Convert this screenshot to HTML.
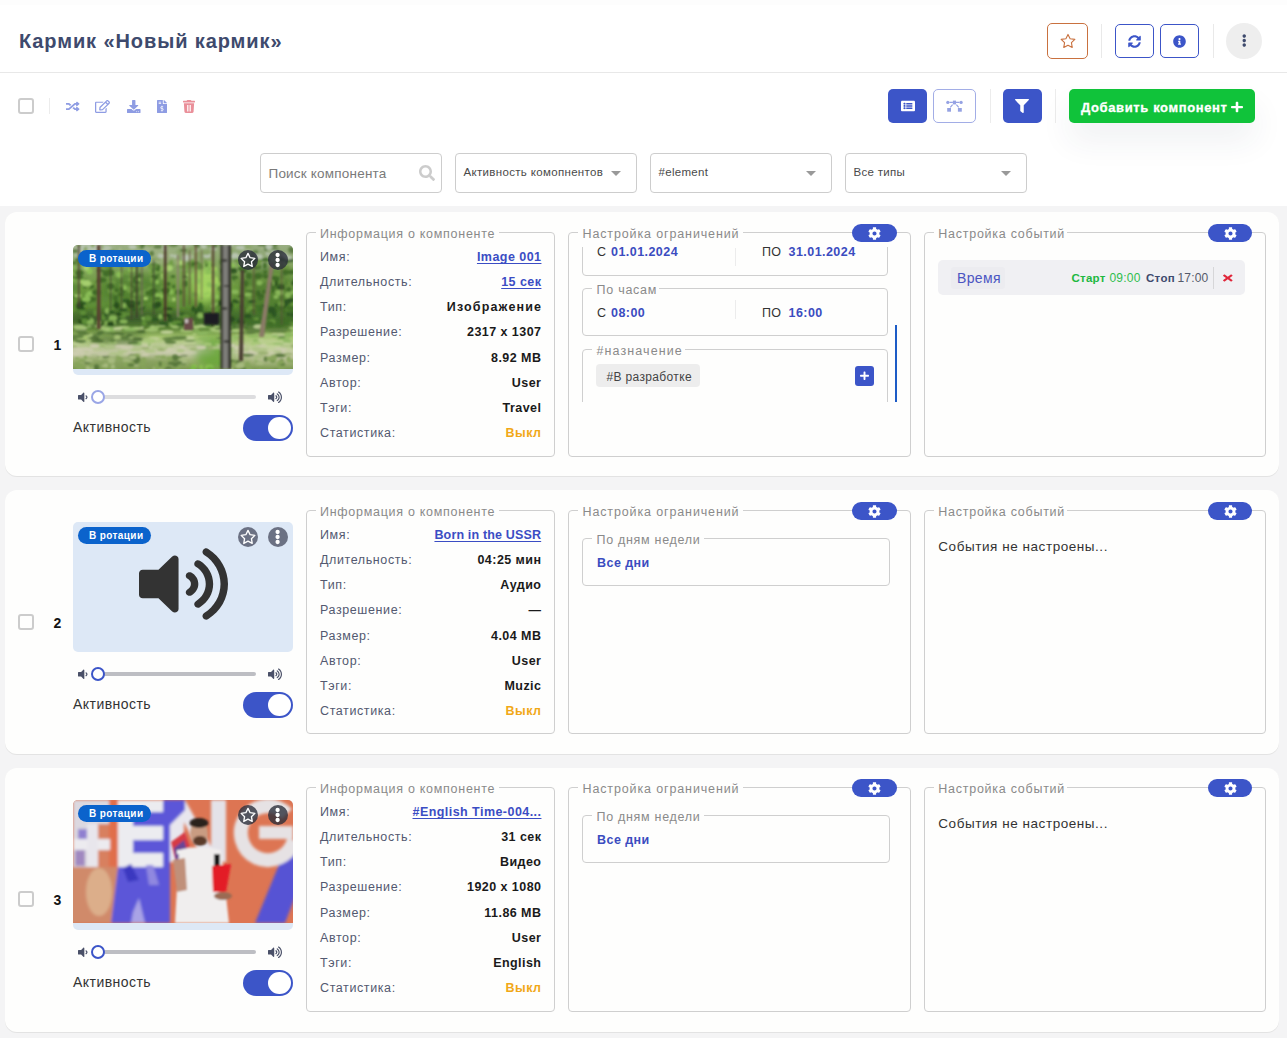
<!DOCTYPE html>
<html><head><meta charset="utf-8"><style>
html,body{margin:0;padding:0;}
body{width:1287px;height:1038px;overflow:hidden;position:relative;background:#ffffff;font-family:"Liberation Sans",sans-serif;}
.a{position:absolute;}
.t{position:absolute;white-space:nowrap;}
svg.a{overflow:visible;}
</style></head><body>
<div class="a" style="left:0px;top:0px;width:1287px;height:5px;background:#fdfdfd;"></div>
<div class="t" style="top:30.87px;font-size:20px;line-height:20px;font-weight:700;color:#3e4a6d;letter-spacing:0.9px;left:19px;">Кармик «Новый кармик»</div>
<div class="a" style="left:0px;top:72px;width:1287px;height:1px;background:#e8e8e8;"></div>
<div class="a" style="left:1047px;top:23px;width:41px;height:36px;box-sizing:border-box;border:1px solid #c9713f;border-radius:5px;"></div>
<svg class="a" style="left:1057.5px;top:31px;width:20px;height:20px" viewBox="0 0 20 20"><polygon points="10.00,3.40 12.12,7.69 16.85,8.38 13.42,11.71 14.23,16.42 10.00,14.20 5.77,16.42 6.58,11.71 3.15,8.38 7.88,7.69" fill="none" stroke="#c9713f" stroke-width="1.1" stroke-linejoin="round"/></svg>
<div class="a" style="left:1101px;top:24px;width:1px;height:34px;background:#e9e9e9;"></div>
<div class="a" style="left:1115px;top:24px;width:39px;height:34px;box-sizing:border-box;border:1px solid #3c55c8;border-radius:5px;"></div>
<svg class="a" style="left:1128px;top:35px;width:13px;height:13px;" viewBox="0 0 512 512" preserveAspectRatio="none"><path fill="#3c55c8" d="M370.72 133.28C339.458 104.008 298.888 87.962 255.848 88c-77.458.068-144.328 53.178-162.791 126.85-1.344 5.363-6.122 9.15-11.651 9.15H24.103c-7.498 0-13.194-6.807-11.807-14.176C33.933 94.924 134.813 8 256 8c66.448 0 126.791 26.136 171.315 68.685L463.03 40.97C478.149 25.851 504 36.559 504 57.941V192c0 13.255-10.745 24-24 24H345.941c-21.382 0-32.090-25.851-16.971-40.971l41.750-41.749zM32 296h134.059c21.382 0 32.090 25.851 16.971 40.971l-41.750 41.750c31.262 29.273 71.835 45.319 114.876 45.280 77.418-.07 144.315-53.144 162.787-126.849 1.344-5.363 6.122-9.150 11.651-9.150h57.304c7.498 0 13.194 6.807 11.807 14.176C478.067 417.076 377.187 504 256 504c-66.448 0-126.791-26.136-171.315-68.685L48.970 471.030C33.851 486.149 8 475.441 8 454.059V320c0-13.255 10.745-24 24-24z"/></svg>
<div class="a" style="left:1160px;top:24px;width:39px;height:34px;box-sizing:border-box;border:1px solid #3c55c8;border-radius:5px;"></div>
<svg class="a" style="left:1173px;top:34.5px;width:13px;height:13px;" viewBox="0 0 512 512" preserveAspectRatio="none"><path fill="#3c55c8" d="M256 8C119.043 8 8 119.083 8 256c0 136.997 111.043 248 248 248s248-111.003 248-248C504 119.083 392.957 8 256 8zm0 110c23.196 0 42 18.804 42 42s-18.804 42-42 42-42-18.804-42-42 18.804-42 42-42zm56 254c0 6.627-5.373 12-12 12h-88c-6.627 0-12-5.373-12-12v-24c0-6.627 5.373-12 12-12h12v-64h-12c-6.627 0-12-5.373-12-12v-24c0-6.627 5.373-12 12-12h64c6.627 0 12 5.373 12 12v100h12c6.627 0 12 5.373 12 12v24z"/></svg>
<div class="a" style="left:1213px;top:24px;width:1px;height:34px;background:#e9e9e9;"></div>
<div class="a" style="left:1226px;top:23px;width:36px;height:36px;background:#eeeeee;border-radius:50%;"></div>
<svg class="a" style="left:1241.5px;top:34px;width:4.5px;height:13px;" viewBox="0 0 192 512" preserveAspectRatio="none"><path fill="#3e4a6d" d="M96 184c39.8 0 72 32.2 72 72s-32.2 72-72 72-72-32.2-72-72 32.2-72 72-72zM24 80c0 39.8 32.2 72 72 72s72-32.2 72-72S135.8 8 96 8 24 40.2 24 80zm0 352c0 39.8 32.2 72 72 72s72-32.2 72-72-32.2-72-72-72-72 32.2-72 72z"/></svg>
<div class="a" style="left:18px;top:98px;width:16px;height:16px;box-sizing:border-box;border:2px solid #cccccc;border-radius:3px;"></div>
<div class="a" style="left:49px;top:98px;width:1px;height:16px;background:#ececec;"></div>
<svg class="a" style="left:65.5px;top:100.5px;width:13.5px;height:11px;" viewBox="0 0 512 512" preserveAspectRatio="none"><path fill="#8e9ce3" d="M504.971 359.029c9.373 9.373 9.373 24.569 0 33.941l-80 79.984c-15.010 15.010-40.971 4.490-40.971-16.971V416h-58.785a12.004 12.004 0 0 1-8.773-3.812l-70.556-75.596 53.333-57.143L352 336h32v-39.981c0-21.438 25.943-31.998 40.971-16.971l80 79.981zM12 176h84l52.781 56.551 53.333-57.143-70.556-75.596A11.999 11.999 0 0 0 122.785 96H12c-6.627 0-12 5.373-12 12v56c0 6.627 5.373 12 12 12zm372 0v39.984c0 21.460 25.961 31.980 40.971 16.971l80-79.984c9.373-9.373 9.373-24.569 0-33.941l-80-79.981C409.943 24.021 384 34.582 384 56.019V96h-58.785a12.004 12.004 0 0 0-8.773 3.812L96 336H12c-6.627 0-12 5.373-12 12v56c0 6.627 5.373 12 12 12h110.785c3.326 0 6.503-1.381 8.773-3.812L352 176h32z"/></svg>
<svg class="a" style="left:95px;top:99.5px;width:15px;height:13px;" viewBox="0 0 576 512" preserveAspectRatio="none"><path fill="#8e9ce3" d="M402.3 344.9l32-32c5-5 13.7-1.5 13.7 5.7V464c0 26.5-21.5 48-48 48H48c-26.5 0-48-21.5-48-48V112c0-26.5 21.5-48 48-48h273.5c7.1 0 10.7 8.6 5.7 13.7l-32 32c-1.5 1.5-3.5 2.3-5.7 2.3H48v352h352V350.5c0-2.1.8-4.1 2.3-5.6zm156.6-201.8L296.3 405.7l-90.4 10c-26.2 2.9-48.5-19.2-45.6-45.6l10-90.4L432.9 17.1c22.9-22.9 59.9-22.9 82.7 0l43.2 43.2c22.9 22.9 22.9 60 .1 82.8zM460.1 174L402 115.9 216.2 301.8l-7.3 65.3 65.3-7.3L460.1 174zm64.8-79.7l-43.2-43.2c-4.1-4.1-10.8-4.1-14.8 0L436 82l58.1 58.1 30.9-30.9c4-4.2 4-10.8-.1-14.9z"/></svg>
<svg class="a" style="left:127px;top:99.5px;width:13.5px;height:13px;" viewBox="0 0 512 512" preserveAspectRatio="none"><path fill="#8e9ce3" d="M216 0h80c13.3 0 24 10.7 24 24v168h87.7c17.8 0 26.7 21.5 14.1 34.1L269.7 378.3c-7.5 7.5-19.8 7.5-27.3 0L90.1 226.1c-12.6-12.6-3.7-34.1 14.1-34.1H192V24c0-13.3 10.7-24 24-24zm296 376v112c0 13.3-10.7 24-24 24H24c-13.3 0-24-10.7-24-24V376c0-13.3 10.7-24 24-24h146.7l49 49c20.1 20.1 52.5 20.1 72.6 0l49-49H488c13.3 0 24 10.7 24 24zm-124 88c0-11-9-20-20-20s-20 9-20 20 9 20 20 20 20-9 20-20zm64 0c0-11-9-20-20-20s-20 9-20 20 9 20 20 20 20-9 20-20z"/></svg>
<svg class="a" style="left:157px;top:99.5px;width:10px;height:13px;" viewBox="0 0 384 512" preserveAspectRatio="none"><path fill="#8e9ce3" d="M377 105L279.1 7c-4.5-4.5-10.6-7-17-7H256v128h128v-6.1c0-6.3-2.5-12.4-7-16.9zm-153 31V0H24C10.7 0 0 10.7 0 24v464c0 13.3 10.7 24 24 24h336c13.3 0 24-10.7 24-24V160H248c-13.2 0-24-10.8-24-24zM64 72c0-4.42 3.58-8 8-8h80c4.42 0 8 3.58 8 8v16c0 4.42-3.58 8-8 8H72c-4.42 0-8-3.58-8-8V72zm0 80v-16c0-4.42 3.58-8 8-8h80c4.42 0 8 3.58 8 8v16c0 4.42-3.58 8-8 8H72c-4.42 0-8-3.58-8-8zm144 263.88V440c0 4.42-3.58 8-8 8h-16c-4.42 0-8-3.58-8-8v-24.29c-11.29-.58-22.27-4.52-31.37-11.35-3.9-2.93-4.1-8.77-.57-12.14l11.75-11.21c2.77-2.64 6.89-2.76 10.13-.73 3.87 2.42 8.26 3.72 12.82 3.72h28.11c6.5 0 11.8-5.92 11.8-13.19 0-5.95-3.61-11.19-8.77-12.73l-45-13.5c-18.59-5.580-31.58-23.42-31.58-43.39 0-24.52 19.05-44.44 42.67-45.07V232c0-4.42 3.58-8 8-8h16c4.42 0 8 3.58 8 8v24.29c11.29.58 22.27 4.51 31.37 11.35 3.9 2.93 4.1 8.77.57 12.14l-11.75 11.21c-2.77 2.64-6.89 2.76-10.13.73-3.87-2.43-8.26-3.72-12.82-3.72h-28.11c-6.5 0-11.8 5.92-11.8 13.19 0 5.95 3.61 11.19 8.77 12.73l45 13.5c18.59 5.58 31.58 23.42 31.58 43.39 0 24.53-19.05 44.44-42.67 45.07z"/></svg>
<svg class="a" style="left:183px;top:99.5px;width:12px;height:13px;" viewBox="0 0 448 512" preserveAspectRatio="none"><path fill="#ea8f99" d="M432 32H312l-9.4-18.7A24 24 0 0 0 281.1 0H166.8a23.72 23.72 0 0 0-21.4 13.3L136 32H16A16 16 0 0 0 0 48v32a16 16 0 0 0 16 16h416a16 16 0 0 0 16-16V48a16 16 0 0 0-16-16zM53.2 467a48 48 0 0 0 47.9 45h245.8a48 48 0 0 0 47.9-45L416 128H32zM150 192h30v256h-30zM209 192h30v256h-30zM268 192h30v256h-30z"/></svg>
<div class="a" style="left:888px;top:89px;width:39px;height:34px;background:#3c55c8;border-radius:5px;"></div>
<svg class="a" style="left:900.5px;top:100px;width:14px;height:12px;" viewBox="0 0 512 512" preserveAspectRatio="none"><path fill="#ffffff" d="M464 480H48c-26.51 0-48-21.49-48-48V80c0-26.51 21.49-48 48-48h416c26.51 0 48 21.49 48 48v352c0 26.51-21.49 48-48 48zM128 120c-22.091 0-40 17.909-40 40s17.909 40 40 40 40-17.909 40-40-17.909-40-40-40zm0 96c-22.091 0-40 17.909-40 40s17.909 40 40 40 40-17.909 40-40-17.909-40-40-40zm0 96c-22.091 0-40 17.909-40 40s17.909 40 40 40 40-17.909 40-40-17.909-40-40-40zm288-136v-32c0-6.627-5.373-12-12-12H204c-6.627 0-12 5.373-12 12v32c0 6.627 5.373 12 12 12h200c6.627 0 12-5.373 12-12zm0 96v-32c0-6.627-5.373-12-12-12H204c-6.627 0-12 5.373-12 12v32c0 6.627 5.373 12 12 12h200c6.627 0 12-5.373 12-12zm0 96v-32c0-6.627-5.373-12-12-12H204c-6.627 0-12 5.373-12 12v32c0 6.627 5.373 12 12 12h200c6.627 0 12-5.373 12-12z"/></svg>
<div class="a" style="left:933px;top:89px;width:43px;height:34px;box-sizing:border-box;border:1px solid #a2ade6;border-radius:5px;"></div>
<svg class="a" style="left:946px;top:100px;width:17px;height:12px" viewBox="0 0 17 12"><g fill="#95a2e3"><circle cx="1.8" cy="2.4" r="1.6"/><circle cx="15.1" cy="2.4" r="1.6"/><rect x="6.9" y="0.6" width="3.1" height="3.8"/><rect x="1.2" y="8" width="3.8" height="3.7"/><rect x="11.9" y="8" width="3.9" height="3.7"/></g><g stroke="#95a2e3" stroke-width="1.1" fill="none"><path d="M3.4 2.4H6.9M10 2.4H13.5M6.6 4.6L4.3 7.4M10.4 4.6L12.7 7.4"/></g></svg>
<div class="a" style="left:990px;top:89px;width:1px;height:34px;background:#ececec;"></div>
<div class="a" style="left:1003px;top:89px;width:39px;height:34px;background:#3c55c8;border-radius:5px;"></div>
<svg class="a" style="left:1015px;top:99px;width:14px;height:14px;" viewBox="0 0 512 512" preserveAspectRatio="none"><path fill="#ffffff" d="M487.976 0H24.028C2.710 0-8.047 25.866 7.058 40.971L192 225.941V432c0 7.831 3.821 15.170 10.237 19.662l80 55.980C298.020 518.690 320 507.493 320 487.980V225.941l184.947-184.970C520.021 25.896 509.338 0 487.976 0z"/></svg>
<div class="a" style="left:1055px;top:89px;width:1px;height:34px;background:#ececec;"></div>
<div class="a" style="left:1069px;top:89px;width:186px;height:34px;background:#10c33a;border-radius:5px;box-shadow:0 18px 32px rgba(40,50,90,0.07);"></div>
<div class="t" style="top:100.80px;font-size:13px;line-height:13px;font-weight:700;color:#ffffff;letter-spacing:0.62px;left:1081px;-webkit-text-stroke:0.3px #ffffff;">Добавить компонент</div>
<svg class="a" style="left:1230.5px;top:100.5px;width:12px;height:12px;transform:none;" viewBox="0 0 448 512" preserveAspectRatio="none"><path fill="#ffffff" d="M416 208H272V64c0-17.67-14.33-32-32-32h-32c-17.67 0-32 14.33-32 32v144H32c-17.67 0-32 14.33-32 32v32c0 17.67 14.33 32 32 32h144v144c0 17.67 14.33 32 32 32h32c17.67 0 32-14.33 32-32V304h144c17.67 0 32-14.33 32-32v-32c0-17.67-14.33-32-32-32z"/></svg>
<div class="a" style="left:260px;top:153px;width:182px;height:40px;box-sizing:border-box;border:1px solid #cdcdcd;border-radius:4px;background:#fff;"></div>
<div class="t" style="top:167.07px;font-size:13.5px;line-height:13.5px;font-weight:400;color:#7a7a7a;letter-spacing:0.2px;left:268.5px;">Поиск компонента</div>
<svg class="a" style="left:419px;top:165px;width:16px;height:16px;" viewBox="0 0 512 512" preserveAspectRatio="none"><path fill="#cccccc" d="M505 442.7L405.3 343c-4.5-4.5-10.6-7-17-7H372c27.6-35.3 44-79.7 44-128C416 93.1 322.9 0 208 0S0 93.1 0 208s93.1 208 208 208c48.3 0 92.7-16.4 128-44v16.3c0 6.4 2.5 12.5 7 17l99.7 99.7c9.4 9.4 24.6 9.4 33.9 0l28.3-28.3c9.4-9.4 9.4-24.6.1-34zM208 336c-70.7 0-128-57.2-128-128 0-70.7 57.2-128 128-128 70.7 0 128 57.2 128 128 0 70.7-57.2 128-128 128z"/></svg>
<div class="a" style="left:455px;top:153px;width:182px;height:40px;box-sizing:border-box;border:1px solid #cdcdcd;border-radius:4px;background:#fff;"></div>
<div class="t" style="top:166.87px;font-size:11.5px;line-height:11.5px;font-weight:400;color:#4a4a4a;letter-spacing:0.33px;left:463.5px;">Активность комопнентов</div>
<svg class="a" style="left:611px;top:171px;width:10px;height:5px" viewBox="0 0 10 5"><path d="M0 0H10L5 5z" fill="#999"/></svg>
<div class="a" style="left:650px;top:153px;width:182px;height:40px;box-sizing:border-box;border:1px solid #cdcdcd;border-radius:4px;background:#fff;"></div>
<div class="t" style="top:166.87px;font-size:11.5px;line-height:11.5px;font-weight:400;color:#4a4a4a;letter-spacing:0.3px;left:658.5px;">#element</div>
<svg class="a" style="left:806px;top:171px;width:10px;height:5px" viewBox="0 0 10 5"><path d="M0 0H10L5 5z" fill="#999"/></svg>
<div class="a" style="left:845px;top:153px;width:182px;height:40px;box-sizing:border-box;border:1px solid #cdcdcd;border-radius:4px;background:#fff;"></div>
<div class="t" style="top:166.87px;font-size:11.5px;line-height:11.5px;font-weight:400;color:#4a4a4a;letter-spacing:0.3px;left:853.5px;">Все типы</div>
<svg class="a" style="left:1001px;top:171px;width:10px;height:5px" viewBox="0 0 10 5"><path d="M0 0H10L5 5z" fill="#999"/></svg>
<div class="a" style="left:0px;top:206px;width:1287px;height:832px;background:#f4f4f5;"></div>
<div class="a" style="left:5px;top:212px;width:1274px;height:264px;background:#fefefd;border-radius:12px;box-shadow:0 1px 0 #e3e3e3;"></div>
<div class="a" style="left:18px;top:336px;width:16px;height:16px;box-sizing:border-box;border:2px solid #cccccc;border-radius:3px;"></div>
<div class="t" style="top:338.15px;font-size:14px;line-height:14px;font-weight:700;color:#141414;left:53.5px;">1</div>
<div class="a" style="left:73px;top:245px;width:220px;height:130px;background:#dde8f6;border-radius:5px;"></div>
<div class="a" style="left:73px;top:245px;width:220px;height:124px;overflow:hidden;border-radius:5px 5px 0 0;"><svg class="a" style="left:0;top:0px;width:220px;height:124px" viewBox="0 0 220 124" preserveAspectRatio="none">
<defs>
<linearGradient id="fg" x1="0" y1="0" x2="0" y2="1">
<stop offset="0" stop-color="#9aae82"/><stop offset="0.15" stop-color="#86a462"/><stop offset="0.35" stop-color="#6c9a3e"/><stop offset="0.5" stop-color="#5b8a33"/><stop offset="0.6" stop-color="#44692a"/><stop offset="0.67" stop-color="#587f34"/><stop offset="0.74" stop-color="#a3c26c"/><stop offset="0.8" stop-color="#b3c888"/><stop offset="0.87" stop-color="#c4c9a6"/><stop offset="0.93" stop-color="#9fb276"/><stop offset="1" stop-color="#7d9a52"/>
</linearGradient>
<filter id="fb" x="-20%" y="-10%" width="140%" height="120%"><feGaussianBlur stdDeviation="0.9"/></filter>
<filter id="fbl" x="-5%" y="-5%" width="110%" height="110%"><feGaussianBlur stdDeviation="0.8"/></filter>
<filter id="fb2" x="-30%" y="-30%" width="160%" height="160%"><feGaussianBlur stdDeviation="4"/></filter>
<filter id="ftex" x="0" y="0" width="100%" height="100%"><feTurbulence type="fractalNoise" baseFrequency="0.1 0.08" numOctaves="3" seed="7"/><feColorMatrix type="matrix" values="0 0 0 0 0.1  0 0 0 0 0.17  0 0 0 0 0.05  3.2 0 0 0 -1.35"/></filter>
<filter id="ftex2" x="0" y="0" width="100%" height="100%"><feTurbulence type="fractalNoise" baseFrequency="0.13 0.1" numOctaves="2" seed="21"/><feColorMatrix type="matrix" values="0 0 0 0 0.66  0 0 0 0 0.86  0 0 0 0 0.36  3.0 0 0 0 -1.5"/></filter>
</defs>
<rect width="220" height="124" fill="url(#fg)"/>
<g filter="url(#fb2)">
<ellipse cx="18" cy="6" rx="20" ry="9" fill="#c2ccc0" opacity="0.8"/>
<ellipse cx="80" cy="12" rx="25" ry="8" fill="#a9b88e" opacity="0.6"/>
<ellipse cx="60" cy="45" rx="35" ry="16" fill="#4d7a2c" opacity="0.7"/>
<ellipse cx="132" cy="40" rx="13" ry="18" fill="#a6d862" opacity="0.9"/>
<ellipse cx="195" cy="50" rx="28" ry="28" fill="#4f7c2e" opacity="0.8"/>
<ellipse cx="188" cy="12" rx="30" ry="9" fill="#90a67a" opacity="0.7"/>
<ellipse cx="60" cy="72" rx="60" ry="5" fill="#38582a" opacity="0.8"/>
<ellipse cx="170" cy="75" rx="50" ry="8" fill="#3f6a2a" opacity="0.8"/>
<ellipse cx="45" cy="94" rx="28" ry="5" fill="#4e6e34" opacity="0.85"/>
<ellipse cx="140" cy="108" rx="18" ry="16" fill="#68a536" opacity="0.9"/>
<ellipse cx="200" cy="100" rx="25" ry="6" fill="#c4d69a" opacity="0.8"/>
<ellipse cx="90" cy="104" rx="50" ry="3" fill="#d4d2bc" opacity="0.8"/>
<ellipse cx="200" cy="112" rx="25" ry="4" fill="#d0cdb4" opacity="0.7"/>
<ellipse cx="60" cy="119" rx="50" ry="6" fill="#7e9a55" opacity="0.8"/>
</g>
<g filter="url(#fbl)" opacity="0.95"><ellipse cx="104.3" cy="82.5" rx="5.6" ry="0.9" fill="#a8c878"/><ellipse cx="81.7" cy="32.6" rx="3.9" ry="2.8" fill="#3f6a28"/><ellipse cx="123.2" cy="83.0" rx="3.1" ry="1.3" fill="#a8c878"/><ellipse cx="201.7" cy="4.6" rx="4.0" ry="1.4" fill="#5a7a40"/><ellipse cx="73.2" cy="49.6" rx="4.0" ry="1.2" fill="#6f9c44"/><ellipse cx="203.8" cy="63.2" rx="1.8" ry="3.5" fill="#2a5220"/><ellipse cx="22.4" cy="52.0" rx="1.9" ry="1.9" fill="#3f6a28"/><ellipse cx="34.0" cy="87.6" rx="2.6" ry="1.0" fill="#5e8040"/><ellipse cx="87.5" cy="51.4" rx="3.3" ry="2.3" fill="#8cc058"/><ellipse cx="3.9" cy="91.4" rx="7.0" ry="2.1" fill="#5e8040"/><ellipse cx="77.5" cy="44.2" rx="3.6" ry="2.7" fill="#6f9c44"/><ellipse cx="50.1" cy="44.2" rx="3.0" ry="3.1" fill="#3f6a28"/><ellipse cx="3.4" cy="103.9" rx="4.5" ry="1.4" fill="#cdcdb0"/><ellipse cx="93.6" cy="47.5" rx="3.8" ry="1.4" fill="#3f6a28"/><ellipse cx="37.2" cy="87.5" rx="2.6" ry="1.1" fill="#4a6a30"/><ellipse cx="140.9" cy="3.8" rx="2.9" ry="1.7" fill="#b9c5b2"/><ellipse cx="104.6" cy="121.6" rx="2.9" ry="3.4" fill="#86a45a"/><ellipse cx="205.9" cy="44.3" rx="2.1" ry="2.9" fill="#2e5420"/><ellipse cx="-1.5" cy="31.9" rx="3.8" ry="2.0" fill="#6f9c44"/><ellipse cx="-1.0" cy="2.2" rx="3.4" ry="3.5" fill="#a4b48c"/><ellipse cx="110.8" cy="0.1" rx="2.5" ry="3.0" fill="#a4b48c"/><ellipse cx="141.5" cy="26.8" rx="3.1" ry="2.3" fill="#8cc058"/><ellipse cx="56.4" cy="120.1" rx="4.2" ry="1.6" fill="#86a45a"/><ellipse cx="194.3" cy="33.2" rx="4.3" ry="2.4" fill="#6a9440"/><ellipse cx="156.3" cy="24.8" rx="2.4" ry="1.8" fill="#3f6a28"/><ellipse cx="153.9" cy="14.1" rx="4.2" ry="2.2" fill="#6f9c44"/><ellipse cx="95.4" cy="124.3" rx="3.2" ry="2.6" fill="#56763a"/><ellipse cx="214.4" cy="95.9" rx="4.4" ry="1.5" fill="#8cb860"/><ellipse cx="175.4" cy="72.4" rx="2.5" ry="2.0" fill="#2a5220"/><ellipse cx="124.3" cy="-0.8" rx="3.6" ry="3.3" fill="#5a7a40"/><ellipse cx="199.8" cy="115.4" rx="3.1" ry="3.0" fill="#86a45a"/><ellipse cx="19.2" cy="42.9" rx="2.4" ry="3.3" fill="#3f6a28"/><ellipse cx="119.4" cy="77.9" rx="1.9" ry="2.4" fill="#8ab85a"/><ellipse cx="86.1" cy="28.9" rx="2.7" ry="1.9" fill="#3f6a28"/><ellipse cx="29.0" cy="8.8" rx="2.4" ry="2.8" fill="#5a7a40"/><ellipse cx="146.0" cy="118.5" rx="2.6" ry="1.3" fill="#6aa83a"/><ellipse cx="97.3" cy="20.3" rx="3.5" ry="2.0" fill="#6f9c44"/><ellipse cx="71.0" cy="119.7" rx="1.5" ry="2.0" fill="#86a45a"/><ellipse cx="42.5" cy="53.2" rx="2.2" ry="3.3" fill="#3f6a28"/><ellipse cx="154.8" cy="18.1" rx="2.9" ry="2.6" fill="#5d8a3a"/><ellipse cx="53.5" cy="56.8" rx="4.1" ry="3.1" fill="#2f5a22"/><ellipse cx="118.6" cy="96.0" rx="4.3" ry="1.6" fill="#c0d098"/><ellipse cx="216.8" cy="69.0" rx="3.5" ry="2.0" fill="#2a5220"/><ellipse cx="69.8" cy="62.0" rx="2.6" ry="1.9" fill="#2f5a22"/><ellipse cx="48.0" cy="67.8" rx="2.3" ry="1.3" fill="#264a1a"/><ellipse cx="61.6" cy="118.7" rx="3.3" ry="2.1" fill="#56763a"/><ellipse cx="199.8" cy="38.7" rx="1.9" ry="2.7" fill="#8ab85a"/><ellipse cx="134.5" cy="99.0" rx="4.4" ry="1.6" fill="#a8c878"/><ellipse cx="89.0" cy="46.4" rx="2.7" ry="2.1" fill="#a9d271"/><ellipse cx="35.4" cy="23.7" rx="2.3" ry="3.4" fill="#3f6a28"/><ellipse cx="9.0" cy="105.6" rx="6.6" ry="1.9" fill="#cdcdb0"/><ellipse cx="163.0" cy="36.7" rx="1.9" ry="3.2" fill="#8ab85a"/><ellipse cx="44.7" cy="111.4" rx="2.5" ry="1.1" fill="#86a45a"/><ellipse cx="35.7" cy="18.2" rx="3.6" ry="1.9" fill="#6f9c44"/><ellipse cx="38.6" cy="37.6" rx="4.1" ry="2.6" fill="#6f9c44"/><ellipse cx="151.8" cy="66.7" rx="2.8" ry="2.4" fill="#5f8f38"/><ellipse cx="178.0" cy="62.7" rx="3.4" ry="2.3" fill="#6a9a3e"/><ellipse cx="84.8" cy="50.9" rx="3.0" ry="2.8" fill="#8cc058"/><ellipse cx="206.0" cy="60.9" rx="4.1" ry="2.8" fill="#2a5220"/><ellipse cx="151.2" cy="52.5" rx="2.7" ry="2.6" fill="#a9d271"/><ellipse cx="186.6" cy="13.8" rx="1.7" ry="1.4" fill="#b9c5b2"/><ellipse cx="9.8" cy="-1.9" rx="2.2" ry="1.5" fill="#5a7a40"/><ellipse cx="136.2" cy="122.5" rx="4.4" ry="2.9" fill="#88c050"/><ellipse cx="3.3" cy="26.6" rx="4.3" ry="2.3" fill="#6f9c44"/><ellipse cx="168.0" cy="52.1" rx="3.1" ry="1.9" fill="#3f6a28"/><ellipse cx="16.7" cy="75.9" rx="4.4" ry="3.5" fill="#8ab85a"/><ellipse cx="208.0" cy="44.1" rx="2.4" ry="3.3" fill="#6a9440"/><ellipse cx="148.2" cy="-1.4" rx="2.2" ry="2.3" fill="#5a7a40"/><ellipse cx="183.6" cy="95.4" rx="4.0" ry="1.2" fill="#8cb860"/><ellipse cx="220.6" cy="60.0" rx="2.1" ry="2.6" fill="#6a9a3e"/><ellipse cx="78.7" cy="27.0" rx="2.7" ry="2.6" fill="#6f9c44"/><ellipse cx="119.3" cy="120.8" rx="3.7" ry="1.8" fill="#86a45a"/><ellipse cx="20.1" cy="92.8" rx="5.4" ry="1.0" fill="#5e8040"/><ellipse cx="131.7" cy="72.0" rx="2.6" ry="1.9" fill="#5f8f38"/><ellipse cx="222.4" cy="39.9" rx="3.0" ry="2.3" fill="#3f6a28"/><ellipse cx="87.3" cy="23.6" rx="2.5" ry="2.0" fill="#8cc058"/><ellipse cx="209.0" cy="35.6" rx="2.5" ry="2.7" fill="#6a9440"/><ellipse cx="113.6" cy="81.2" rx="2.8" ry="1.6" fill="#a8c878"/><ellipse cx="53.6" cy="102.3" rx="7.1" ry="1.6" fill="#cdcdb0"/><ellipse cx="96.0" cy="33.7" rx="4.0" ry="1.7" fill="#6f9c44"/><ellipse cx="141.2" cy="79.8" rx="3.3" ry="2.3" fill="#264a1a"/><ellipse cx="100.6" cy="118.8" rx="2.7" ry="2.3" fill="#86a45a"/><ellipse cx="158.6" cy="94.7" rx="3.5" ry="1.4" fill="#c0d098"/><ellipse cx="110.4" cy="83.1" rx="5.4" ry="1.7" fill="#5e8040"/><ellipse cx="66.3" cy="0.2" rx="4.2" ry="3.0" fill="#8aa468"/><ellipse cx="215.6" cy="114.3" rx="2.0" ry="3.1" fill="#86a45a"/><ellipse cx="68.0" cy="30.7" rx="2.7" ry="1.3" fill="#6f9c44"/><ellipse cx="23.4" cy="36.9" rx="2.0" ry="1.5" fill="#5d8a3a"/><ellipse cx="82.8" cy="60.7" rx="3.3" ry="3.3" fill="#2f5a22"/><ellipse cx="48.5" cy="108.8" rx="6.8" ry="2.0" fill="#b0c488"/><ellipse cx="80.0" cy="21.5" rx="4.2" ry="3.0" fill="#3f6a28"/><ellipse cx="175.9" cy="30.9" rx="3.1" ry="3.3" fill="#3f6a28"/><ellipse cx="136.5" cy="21.1" rx="4.0" ry="3.1" fill="#3f6a28"/><ellipse cx="95.5" cy="-0.2" rx="3.0" ry="2.0" fill="#8aa468"/><ellipse cx="14.6" cy="116.6" rx="3.1" ry="2.5" fill="#56763a"/><ellipse cx="199.6" cy="68.5" rx="3.1" ry="3.1" fill="#3f6e28"/><ellipse cx="200.5" cy="0.2" rx="3.9" ry="2.4" fill="#5a7a40"/><ellipse cx="220.8" cy="25.6" rx="2.7" ry="3.0" fill="#6a9440"/><ellipse cx="115.5" cy="98.0" rx="5.7" ry="1.9" fill="#c0d098"/><ellipse cx="79.1" cy="34.3" rx="1.7" ry="1.5" fill="#6f9c44"/><ellipse cx="217.5" cy="15.3" rx="3.3" ry="1.5" fill="#2e5420"/><ellipse cx="117.4" cy="20.0" rx="4.0" ry="3.2" fill="#5d8a3a"/><ellipse cx="47.5" cy="49.3" rx="3.5" ry="1.8" fill="#3f6a28"/><ellipse cx="155.5" cy="94.7" rx="6.4" ry="1.8" fill="#a8c878"/><ellipse cx="167.8" cy="53.4" rx="2.0" ry="1.2" fill="#6a9440"/><ellipse cx="77.9" cy="9.2" rx="3.0" ry="2.2" fill="#8aa468"/><ellipse cx="125.0" cy="67.0" rx="3.1" ry="3.5" fill="#264a1a"/><ellipse cx="64.5" cy="110.4" rx="3.9" ry="2.0" fill="#86a45a"/><ellipse cx="68.9" cy="118.1" rx="3.5" ry="2.8" fill="#86a45a"/><ellipse cx="24.5" cy="121.8" rx="1.7" ry="1.6" fill="#a8bc80"/><ellipse cx="182.1" cy="85.3" rx="7.2" ry="1.8" fill="#5e8040"/><ellipse cx="203.0" cy="38.2" rx="1.7" ry="3.4" fill="#2e5420"/><ellipse cx="146.2" cy="59.4" rx="2.1" ry="1.7" fill="#2f5a22"/><ellipse cx="18.2" cy="59.3" rx="4.2" ry="3.3" fill="#5f8f38"/><ellipse cx="149.2" cy="57.8" rx="3.8" ry="2.8" fill="#264a1a"/><ellipse cx="188.1" cy="85.1" rx="5.2" ry="1.0" fill="#5e8040"/><ellipse cx="98.2" cy="17.1" rx="2.1" ry="2.1" fill="#6f9c44"/><ellipse cx="138.1" cy="39.6" rx="4.5" ry="2.8" fill="#8cc058"/><ellipse cx="95.1" cy="47.9" rx="2.1" ry="3.4" fill="#5d8a3a"/><ellipse cx="143.9" cy="81.5" rx="3.1" ry="1.5" fill="#a8c878"/><ellipse cx="70.3" cy="73.3" rx="2.0" ry="1.7" fill="#8ab85a"/><ellipse cx="106.6" cy="112.7" rx="2.0" ry="1.4" fill="#56763a"/><ellipse cx="134.6" cy="87.2" rx="5.1" ry="0.9" fill="#8cb860"/><ellipse cx="109.0" cy="115.2" rx="1.9" ry="1.8" fill="#a8bc80"/><ellipse cx="53.0" cy="108.8" rx="3.7" ry="0.8" fill="#cdcdb0"/><ellipse cx="58.4" cy="120.2" rx="4.1" ry="2.7" fill="#86a45a"/><ellipse cx="6.4" cy="105.1" rx="3.0" ry="1.0" fill="#cdcdb0"/><ellipse cx="191.9" cy="20.8" rx="1.7" ry="3.3" fill="#3f6a28"/><ellipse cx="162.9" cy="15.3" rx="2.4" ry="1.7" fill="#6a9440"/><ellipse cx="205.3" cy="106.2" rx="5.0" ry="0.8" fill="#cdcdb0"/><ellipse cx="63.8" cy="100.2" rx="6.8" ry="0.8" fill="#cdcdb0"/><ellipse cx="214.0" cy="16.6" rx="1.7" ry="1.8" fill="#2e5420"/><ellipse cx="56.5" cy="90.8" rx="3.0" ry="1.6" fill="#4a6a30"/><ellipse cx="131.5" cy="93.5" rx="6.6" ry="1.3" fill="#8cb860"/><ellipse cx="88.8" cy="120.4" rx="4.2" ry="3.5" fill="#86a45a"/><ellipse cx="58.8" cy="87.5" rx="6.7" ry="1.1" fill="#5e8040"/><ellipse cx="104.8" cy="-2.5" rx="1.8" ry="1.2" fill="#b9c5b2"/><ellipse cx="207.8" cy="85.3" rx="6.5" ry="2.0" fill="#5e8040"/><ellipse cx="154.3" cy="82.1" rx="5.7" ry="0.8" fill="#8cb860"/><ellipse cx="32.5" cy="54.9" rx="3.6" ry="2.9" fill="#5d8a3a"/><ellipse cx="67.6" cy="35.7" rx="3.7" ry="1.3" fill="#5d8a3a"/><ellipse cx="68.3" cy="48.0" rx="2.4" ry="2.8" fill="#6f9c44"/><ellipse cx="27.6" cy="5.6" rx="1.9" ry="2.6" fill="#a4b48c"/><ellipse cx="-1.7" cy="57.1" rx="2.6" ry="1.9" fill="#5f8f38"/><ellipse cx="21.4" cy="52.1" rx="2.3" ry="1.3" fill="#6f9c44"/><ellipse cx="206.7" cy="90.4" rx="7.1" ry="1.8" fill="#c0d098"/><ellipse cx="48.2" cy="11.1" rx="4.5" ry="2.8" fill="#5a7a40"/><ellipse cx="29.4" cy="99.9" rx="5.0" ry="0.8" fill="#a8c878"/><ellipse cx="215.7" cy="77.9" rx="1.8" ry="1.4" fill="#2a5220"/><ellipse cx="76.6" cy="59.1" rx="1.9" ry="1.6" fill="#5f8f38"/><ellipse cx="93.6" cy="21.2" rx="2.0" ry="2.2" fill="#6f9c44"/><ellipse cx="11.0" cy="58.6" rx="1.7" ry="2.9" fill="#8ab85a"/><ellipse cx="156.4" cy="120.7" rx="2.0" ry="2.2" fill="#86a45a"/><ellipse cx="13.3" cy="108.8" rx="2.6" ry="2.1" fill="#b0c488"/><ellipse cx="219.5" cy="4.8" rx="4.2" ry="3.4" fill="#5a7a40"/><ellipse cx="128.1" cy="81.3" rx="4.7" ry="1.9" fill="#c0d098"/><ellipse cx="120.7" cy="49.7" rx="3.4" ry="2.5" fill="#6f9c44"/><ellipse cx="171.7" cy="39.9" rx="3.7" ry="1.7" fill="#6a9440"/><ellipse cx="115.9" cy="91.5" rx="2.7" ry="0.9" fill="#a8c878"/><ellipse cx="137.1" cy="19.2" rx="3.2" ry="3.2" fill="#8cc058"/><ellipse cx="47.5" cy="74.6" rx="2.7" ry="2.2" fill="#2f5a22"/><ellipse cx="151.3" cy="41.8" rx="4.5" ry="2.3" fill="#3f6a28"/><ellipse cx="205.9" cy="124.9" rx="1.6" ry="3.3" fill="#86a45a"/><ellipse cx="211.4" cy="99.5" rx="3.6" ry="1.7" fill="#c0d098"/><ellipse cx="99.2" cy="78.5" rx="2.9" ry="2.7" fill="#8ab85a"/><ellipse cx="-1.7" cy="80.1" rx="5.8" ry="1.9" fill="#5e8040"/><ellipse cx="119.3" cy="15.8" rx="2.1" ry="3.3" fill="#6f9c44"/><ellipse cx="200.6" cy="13.1" rx="2.7" ry="2.6" fill="#b9c5b2"/><ellipse cx="98.0" cy="100.8" rx="4.2" ry="1.0" fill="#cdcdb0"/><ellipse cx="211.3" cy="10.6" rx="3.5" ry="2.7" fill="#b9c5b2"/><ellipse cx="123.1" cy="86.2" rx="3.4" ry="1.1" fill="#8cb860"/><ellipse cx="43.9" cy="60.5" rx="2.9" ry="3.0" fill="#264a1a"/><ellipse cx="169.6" cy="78.4" rx="3.1" ry="1.4" fill="#6a9a3e"/><ellipse cx="94.9" cy="95.3" rx="4.2" ry="0.9" fill="#5e8040"/><ellipse cx="184.9" cy="61.5" rx="3.5" ry="1.3" fill="#3f6e28"/><ellipse cx="57.1" cy="60.0" rx="1.9" ry="3.4" fill="#2f5a22"/><ellipse cx="-2.8" cy="28.2" rx="3.0" ry="2.6" fill="#a9d271"/><ellipse cx="16.6" cy="123.2" rx="4.1" ry="2.4" fill="#a8bc80"/><ellipse cx="66.3" cy="16.3" rx="1.5" ry="3.4" fill="#5d8a3a"/><ellipse cx="97.8" cy="75.2" rx="2.9" ry="2.8" fill="#2f5a22"/><ellipse cx="167.4" cy="19.8" rx="3.3" ry="2.6" fill="#8ab85a"/><ellipse cx="135.9" cy="20.2" rx="3.9" ry="2.1" fill="#3f6a28"/><ellipse cx="177.9" cy="124.1" rx="1.8" ry="2.2" fill="#86a45a"/><ellipse cx="188.4" cy="48.7" rx="4.2" ry="3.0" fill="#6a9440"/><ellipse cx="169.5" cy="85.3" rx="3.0" ry="1.1" fill="#a8c878"/><ellipse cx="185.1" cy="48.4" rx="2.4" ry="2.8" fill="#2e5420"/><ellipse cx="28.9" cy="86.9" rx="3.5" ry="1.8" fill="#5e8040"/><ellipse cx="170.7" cy="72.8" rx="1.9" ry="3.2" fill="#3f6e28"/><ellipse cx="128.1" cy="121.7" rx="2.3" ry="2.3" fill="#88c050"/><ellipse cx="143.0" cy="39.1" rx="2.7" ry="3.3" fill="#8cc058"/><ellipse cx="36.3" cy="85.4" rx="6.5" ry="1.6" fill="#8cb860"/><ellipse cx="56.9" cy="34.6" rx="4.1" ry="1.8" fill="#6f9c44"/><ellipse cx="30.5" cy="111.7" rx="6.3" ry="1.0" fill="#56763a"/><ellipse cx="41.6" cy="77.8" rx="1.5" ry="2.5" fill="#8ab85a"/><ellipse cx="111.1" cy="78.6" rx="1.9" ry="2.3" fill="#264a1a"/><ellipse cx="81.3" cy="93.7" rx="5.3" ry="1.8" fill="#c0d098"/><ellipse cx="65.9" cy="103.5" rx="6.3" ry="1.3" fill="#b0c488"/><ellipse cx="90.6" cy="71.9" rx="2.5" ry="2.3" fill="#2f5a22"/><ellipse cx="199.1" cy="76.7" rx="3.3" ry="2.4" fill="#6a9a3e"/><ellipse cx="36.4" cy="81.1" rx="4.5" ry="1.2" fill="#5e8040"/><ellipse cx="26.5" cy="81.3" rx="6.2" ry="1.2" fill="#a8c878"/><ellipse cx="215.8" cy="77.6" rx="2.5" ry="1.4" fill="#6a9a3e"/><ellipse cx="46.5" cy="113.8" rx="3.6" ry="1.8" fill="#86a45a"/><ellipse cx="16.6" cy="26.2" rx="3.2" ry="3.2" fill="#8cc058"/><ellipse cx="214.5" cy="30.3" rx="1.8" ry="3.1" fill="#6a9440"/><ellipse cx="60.3" cy="54.8" rx="3.3" ry="1.7" fill="#6f9c44"/><ellipse cx="132.0" cy="82.5" rx="5.1" ry="0.9" fill="#8cb860"/><ellipse cx="94.2" cy="67.5" rx="4.2" ry="1.5" fill="#5f8f38"/><ellipse cx="92.8" cy="80.0" rx="2.2" ry="1.8" fill="#2f5a22"/><ellipse cx="123.2" cy="36.0" rx="4.3" ry="3.2" fill="#8cc058"/><ellipse cx="88.9" cy="104.2" rx="5.2" ry="1.8" fill="#9ab070"/><ellipse cx="24.4" cy="96.0" rx="6.7" ry="1.3" fill="#4a6a30"/><ellipse cx="4.1" cy="113.5" rx="2.1" ry="1.2" fill="#86a45a"/><ellipse cx="113.5" cy="85.8" rx="6.7" ry="1.6" fill="#a8c878"/><ellipse cx="207.2" cy="110.3" rx="6.3" ry="2.0" fill="#56763a"/><ellipse cx="151.5" cy="96.7" rx="2.5" ry="2.1" fill="#a8c878"/><ellipse cx="93.2" cy="71.0" rx="3.0" ry="2.0" fill="#5f8f38"/><ellipse cx="68.4" cy="83.0" rx="2.5" ry="1.2" fill="#c0d098"/><ellipse cx="100.2" cy="-0.4" rx="2.9" ry="3.3" fill="#8aa468"/><ellipse cx="162.1" cy="46.8" rx="4.4" ry="2.4" fill="#8ab85a"/><ellipse cx="138.5" cy="102.8" rx="4.3" ry="2.0" fill="#9ab070"/><ellipse cx="200.0" cy="115.0" rx="2.6" ry="2.0" fill="#56763a"/><ellipse cx="183.6" cy="73.8" rx="3.2" ry="1.2" fill="#6a9a3e"/><ellipse cx="10.2" cy="65.4" rx="2.2" ry="2.6" fill="#2f5a22"/><ellipse cx="71.0" cy="97.1" rx="5.2" ry="0.9" fill="#8cb860"/><ellipse cx="1.9" cy="50.7" rx="3.6" ry="2.5" fill="#3f6a28"/><ellipse cx="201.1" cy="9.5" rx="3.0" ry="1.8" fill="#8aa468"/><ellipse cx="102.0" cy="78.8" rx="3.9" ry="2.4" fill="#5f8f38"/><ellipse cx="122.7" cy="18.8" rx="4.2" ry="2.1" fill="#3f6a28"/><ellipse cx="186.9" cy="105.3" rx="7.2" ry="1.7" fill="#b0c488"/><ellipse cx="94.1" cy="98.1" rx="5.4" ry="0.7" fill="#c0d098"/><ellipse cx="148.2" cy="43.6" rx="4.0" ry="2.9" fill="#5d8a3a"/><ellipse cx="63.0" cy="83.0" rx="5.1" ry="1.2" fill="#a8c878"/><ellipse cx="16.9" cy="105.7" rx="3.7" ry="1.2" fill="#cdcdb0"/><ellipse cx="122.8" cy="61.3" rx="4.1" ry="1.4" fill="#5f8f38"/><ellipse cx="185.8" cy="100.2" rx="2.7" ry="1.3" fill="#9ab070"/><ellipse cx="218.4" cy="38.4" rx="3.7" ry="2.0" fill="#3f6a28"/><ellipse cx="199.7" cy="13.3" rx="4.5" ry="2.2" fill="#a4b48c"/><ellipse cx="104.7" cy="114.1" rx="3.7" ry="1.6" fill="#86a45a"/><ellipse cx="35.5" cy="75.8" rx="1.8" ry="1.4" fill="#5f8f38"/><ellipse cx="9.1" cy="36.9" rx="3.4" ry="1.7" fill="#a9d271"/><ellipse cx="55.9" cy="44.4" rx="2.7" ry="3.2" fill="#6f9c44"/><ellipse cx="180.3" cy="9.3" rx="4.4" ry="2.5" fill="#5a7a40"/><ellipse cx="113.3" cy="84.1" rx="5.7" ry="0.9" fill="#a8c878"/><ellipse cx="202.5" cy="25.5" rx="2.2" ry="1.3" fill="#6a9440"/><ellipse cx="175.1" cy="1.8" rx="4.1" ry="1.5" fill="#8aa468"/><ellipse cx="113.2" cy="29.8" rx="2.5" ry="2.3" fill="#a9d271"/><ellipse cx="54.5" cy="27.2" rx="4.4" ry="1.8" fill="#6f9c44"/><ellipse cx="207.5" cy="117.3" rx="2.1" ry="2.4" fill="#56763a"/><ellipse cx="69.6" cy="41.3" rx="1.5" ry="1.5" fill="#3f6a28"/><ellipse cx="109.2" cy="109.1" rx="4.5" ry="1.1" fill="#cdcdb0"/><ellipse cx="28.6" cy="59.4" rx="3.6" ry="1.6" fill="#5f8f38"/><ellipse cx="222.5" cy="87.6" rx="3.9" ry="1.6" fill="#a8c878"/><ellipse cx="21.7" cy="102.1" rx="5.8" ry="1.6" fill="#b0c488"/><ellipse cx="76.2" cy="105.8" rx="4.9" ry="1.9" fill="#b0c488"/><ellipse cx="72.6" cy="103.0" rx="4.1" ry="1.6" fill="#9ab070"/><ellipse cx="212.3" cy="77.8" rx="2.1" ry="1.6" fill="#2a5220"/><ellipse cx="66.6" cy="16.0" rx="3.2" ry="2.2" fill="#a9d271"/><ellipse cx="37.6" cy="63.5" rx="4.4" ry="1.6" fill="#5f8f38"/><ellipse cx="86.0" cy="13.9" rx="1.9" ry="1.9" fill="#8aa468"/><ellipse cx="28.0" cy="79.5" rx="2.6" ry="1.9" fill="#264a1a"/><ellipse cx="164.7" cy="54.9" rx="2.3" ry="2.4" fill="#6a9440"/><ellipse cx="168.8" cy="83.1" rx="2.4" ry="0.9" fill="#8cb860"/><ellipse cx="120.5" cy="63.8" rx="1.8" ry="3.0" fill="#264a1a"/><ellipse cx="67.1" cy="32.3" rx="1.7" ry="1.9" fill="#3f6a28"/><ellipse cx="98.0" cy="-1.9" rx="1.8" ry="1.7" fill="#a4b48c"/><ellipse cx="215.0" cy="109.0" rx="4.8" ry="1.2" fill="#9ab070"/><ellipse cx="167.8" cy="81.0" rx="5.8" ry="2.0" fill="#5e8040"/><ellipse cx="54.7" cy="92.4" rx="6.9" ry="1.0" fill="#4a6a30"/><ellipse cx="169.3" cy="101.1" rx="2.6" ry="1.8" fill="#cdcdb0"/><ellipse cx="25.6" cy="3.3" rx="2.9" ry="2.2" fill="#b9c5b2"/><ellipse cx="158.1" cy="21.1" rx="4.3" ry="3.5" fill="#8cc058"/><ellipse cx="2.1" cy="6.1" rx="3.1" ry="2.0" fill="#5a7a40"/><ellipse cx="89.4" cy="30.4" rx="2.0" ry="3.5" fill="#a9d271"/><ellipse cx="150.8" cy="25.7" rx="2.8" ry="2.9" fill="#3f6a28"/><ellipse cx="59.8" cy="42.5" rx="3.9" ry="1.3" fill="#3f6a28"/><ellipse cx="156.6" cy="64.1" rx="3.2" ry="3.3" fill="#2f5a22"/><ellipse cx="166.9" cy="91.0" rx="5.9" ry="0.8" fill="#c0d098"/><ellipse cx="81.9" cy="13.9" rx="4.2" ry="1.8" fill="#8aa468"/><ellipse cx="66.5" cy="11.6" rx="2.4" ry="2.6" fill="#5a7a40"/><ellipse cx="165.9" cy="16.8" rx="2.3" ry="3.1" fill="#6a9440"/><ellipse cx="164.0" cy="57.0" rx="2.8" ry="1.3" fill="#2a5220"/><ellipse cx="201.5" cy="90.0" rx="3.4" ry="1.6" fill="#c0d098"/><ellipse cx="60.7" cy="46.0" rx="4.2" ry="1.8" fill="#3f6a28"/><ellipse cx="7.6" cy="-0.0" rx="1.6" ry="1.9" fill="#a4b48c"/><ellipse cx="127.6" cy="59.9" rx="1.9" ry="2.5" fill="#2f5a22"/><ellipse cx="12.1" cy="40.4" rx="2.3" ry="3.0" fill="#3f6a28"/><ellipse cx="141.7" cy="33.2" rx="2.7" ry="1.5" fill="#a6d662"/><ellipse cx="221.4" cy="84.1" rx="4.0" ry="1.6" fill="#8cb860"/><ellipse cx="180.4" cy="65.3" rx="2.0" ry="1.3" fill="#3f6e28"/><ellipse cx="182.4" cy="98.5" rx="5.8" ry="1.7" fill="#a8c878"/><ellipse cx="128.1" cy="-1.8" rx="1.6" ry="2.6" fill="#b9c5b2"/><ellipse cx="90.3" cy="42.9" rx="4.1" ry="2.0" fill="#6f9c44"/><ellipse cx="150.7" cy="17.1" rx="4.4" ry="3.3" fill="#5d8a3a"/><ellipse cx="136.8" cy="20.5" rx="2.1" ry="2.8" fill="#8cc058"/><ellipse cx="156.3" cy="24.2" rx="3.2" ry="3.2" fill="#8cc058"/><ellipse cx="185.5" cy="15.7" rx="3.5" ry="1.3" fill="#3f6a28"/><ellipse cx="13.3" cy="22.6" rx="3.1" ry="3.1" fill="#a9d271"/><ellipse cx="203.5" cy="29.1" rx="4.3" ry="2.2" fill="#6a9440"/><ellipse cx="160.3" cy="32.4" rx="2.3" ry="2.2" fill="#3f6a28"/><ellipse cx="161.7" cy="109.6" rx="5.6" ry="0.8" fill="#b0c488"/><ellipse cx="170.6" cy="124.9" rx="2.1" ry="3.3" fill="#86a45a"/><ellipse cx="122.5" cy="23.3" rx="2.3" ry="2.2" fill="#8cc058"/><ellipse cx="54.8" cy="68.9" rx="2.8" ry="1.7" fill="#5f8f38"/><ellipse cx="69.1" cy="1.7" rx="2.2" ry="2.2" fill="#5a7a40"/><ellipse cx="12.5" cy="112.6" rx="1.7" ry="3.4" fill="#86a45a"/><ellipse cx="66.6" cy="40.6" rx="3.5" ry="1.4" fill="#6f9c44"/><ellipse cx="183.1" cy="116.4" rx="1.7" ry="1.4" fill="#86a45a"/><ellipse cx="78.7" cy="85.2" rx="6.9" ry="1.6" fill="#a8c878"/><ellipse cx="47.0" cy="5.3" rx="1.7" ry="3.2" fill="#a4b48c"/><ellipse cx="80.5" cy="25.7" rx="4.1" ry="1.7" fill="#8cc058"/><ellipse cx="197.7" cy="0.2" rx="2.6" ry="1.7" fill="#8aa468"/><ellipse cx="208.3" cy="121.6" rx="3.8" ry="3.1" fill="#86a45a"/><ellipse cx="164.0" cy="91.9" rx="6.7" ry="1.2" fill="#8cb860"/><ellipse cx="39.9" cy="72.9" rx="4.3" ry="2.9" fill="#8ab85a"/><ellipse cx="37.8" cy="45.4" rx="3.2" ry="3.1" fill="#6f9c44"/><ellipse cx="119.0" cy="93.9" rx="5.7" ry="1.1" fill="#a8c878"/><ellipse cx="78.3" cy="22.2" rx="3.2" ry="2.4" fill="#6f9c44"/><ellipse cx="208.6" cy="115.9" rx="2.1" ry="1.8" fill="#56763a"/><ellipse cx="4.1" cy="17.8" rx="2.6" ry="3.1" fill="#6f9c44"/><ellipse cx="116.4" cy="95.5" rx="5.4" ry="1.3" fill="#c0d098"/><ellipse cx="157.8" cy="59.9" rx="2.3" ry="2.7" fill="#264a1a"/><ellipse cx="19.0" cy="80.6" rx="4.4" ry="0.9" fill="#a8c878"/><ellipse cx="12.7" cy="104.0" rx="5.1" ry="1.3" fill="#9ab070"/><ellipse cx="184.2" cy="48.5" rx="1.6" ry="2.6" fill="#3f6a28"/><ellipse cx="134.0" cy="9.9" rx="3.9" ry="3.2" fill="#b9c5b2"/><ellipse cx="182.1" cy="9.2" rx="1.9" ry="2.5" fill="#b9c5b2"/><ellipse cx="85.8" cy="45.1" rx="3.8" ry="3.0" fill="#5d8a3a"/><ellipse cx="50.9" cy="30.8" rx="4.0" ry="2.1" fill="#6f9c44"/><ellipse cx="110.9" cy="28.0" rx="3.4" ry="2.1" fill="#6f9c44"/><ellipse cx="166.8" cy="112.9" rx="2.0" ry="1.7" fill="#a8bc80"/><ellipse cx="33.9" cy="122.0" rx="2.8" ry="1.4" fill="#86a45a"/><ellipse cx="46.2" cy="29.6" rx="3.3" ry="3.2" fill="#8cc058"/><ellipse cx="121.2" cy="121.4" rx="3.0" ry="2.1" fill="#88c050"/><ellipse cx="150.2" cy="51.1" rx="3.9" ry="1.8" fill="#6f9c44"/><ellipse cx="49.9" cy="40.2" rx="4.1" ry="1.8" fill="#6f9c44"/><ellipse cx="21.6" cy="101.0" rx="4.8" ry="2.0" fill="#cdcdb0"/><ellipse cx="29.4" cy="20.7" rx="3.8" ry="2.4" fill="#5d8a3a"/><ellipse cx="211.4" cy="60.3" rx="1.8" ry="3.2" fill="#2a5220"/><ellipse cx="126.8" cy="66.1" rx="3.8" ry="2.0" fill="#2f5a22"/><ellipse cx="213.2" cy="57.8" rx="2.5" ry="3.2" fill="#2a5220"/><ellipse cx="96.4" cy="93.5" rx="7.2" ry="1.4" fill="#5e8040"/><ellipse cx="209.2" cy="14.3" rx="3.6" ry="1.7" fill="#3f6a28"/><ellipse cx="173.8" cy="7.0" rx="4.2" ry="2.9" fill="#a4b48c"/><ellipse cx="188.3" cy="74.3" rx="2.7" ry="1.4" fill="#2a5220"/><ellipse cx="173.0" cy="38.6" rx="2.4" ry="3.4" fill="#3f6a28"/><ellipse cx="35.8" cy="26.9" rx="3.6" ry="3.1" fill="#6f9c44"/><ellipse cx="150.5" cy="74.8" rx="3.5" ry="1.6" fill="#264a1a"/><ellipse cx="20.3" cy="10.7" rx="3.3" ry="3.3" fill="#5a7a40"/><ellipse cx="190.1" cy="108.2" rx="5.6" ry="2.0" fill="#9ab070"/><ellipse cx="186.2" cy="16.2" rx="2.4" ry="2.2" fill="#6a9440"/><ellipse cx="102.2" cy="112.8" rx="3.4" ry="3.3" fill="#56763a"/><ellipse cx="6.7" cy="34.3" rx="4.5" ry="1.4" fill="#8cc058"/><ellipse cx="36.1" cy="83.5" rx="4.6" ry="1.9" fill="#8cb860"/><ellipse cx="196.8" cy="37.4" rx="3.4" ry="3.5" fill="#6a9440"/><ellipse cx="95.7" cy="125.7" rx="3.2" ry="1.2" fill="#a8bc80"/><ellipse cx="26.5" cy="1.8" rx="4.1" ry="2.9" fill="#8aa468"/><ellipse cx="208.4" cy="25.5" rx="1.6" ry="1.3" fill="#6a9440"/><ellipse cx="55.2" cy="83.3" rx="7.1" ry="1.4" fill="#8cb860"/><ellipse cx="22.9" cy="90.9" rx="3.4" ry="1.9" fill="#5e8040"/><ellipse cx="78.4" cy="47.7" rx="2.2" ry="2.9" fill="#3f6a28"/><ellipse cx="29.0" cy="33.2" rx="2.6" ry="1.8" fill="#6f9c44"/><ellipse cx="121.4" cy="89.8" rx="2.4" ry="1.7" fill="#a8c878"/><ellipse cx="109.9" cy="102.2" rx="3.8" ry="1.9" fill="#cdcdb0"/><ellipse cx="66.2" cy="-2.8" rx="2.0" ry="2.8" fill="#a4b48c"/><ellipse cx="171.1" cy="25.4" rx="3.3" ry="2.7" fill="#3f6a28"/><ellipse cx="11.6" cy="109.1" rx="6.9" ry="1.2" fill="#cdcdb0"/><ellipse cx="176.9" cy="22.1" rx="1.6" ry="3.5" fill="#3f6a28"/><ellipse cx="51.0" cy="82.4" rx="5.9" ry="1.6" fill="#a8c878"/><ellipse cx="200.0" cy="44.7" rx="2.1" ry="3.0" fill="#3f6a28"/><ellipse cx="92.8" cy="31.2" rx="2.9" ry="2.9" fill="#6f9c44"/><ellipse cx="222.9" cy="62.4" rx="4.0" ry="2.2" fill="#3f6e28"/><ellipse cx="124.7" cy="6.2" rx="2.1" ry="1.5" fill="#b9c5b2"/><ellipse cx="57.0" cy="19.3" rx="4.3" ry="1.3" fill="#6f9c44"/><ellipse cx="11.9" cy="73.8" rx="4.2" ry="2.5" fill="#5f8f38"/><ellipse cx="173.8" cy="74.7" rx="3.6" ry="2.9" fill="#3f6e28"/><ellipse cx="13.0" cy="36.1" rx="2.1" ry="2.9" fill="#5d8a3a"/><ellipse cx="11.6" cy="72.1" rx="3.1" ry="2.2" fill="#2f5a22"/><ellipse cx="221.7" cy="101.0" rx="6.1" ry="1.9" fill="#9ab070"/><ellipse cx="197.9" cy="98.7" rx="5.6" ry="0.8" fill="#a8c878"/><ellipse cx="72.3" cy="98.1" rx="2.6" ry="1.7" fill="#5e8040"/><ellipse cx="20.1" cy="45.9" rx="2.3" ry="2.7" fill="#6f9c44"/><ellipse cx="52.2" cy="102.5" rx="4.3" ry="1.8" fill="#cdcdb0"/><ellipse cx="81.8" cy="19.8" rx="2.2" ry="2.4" fill="#5d8a3a"/><ellipse cx="110.9" cy="110.6" rx="4.0" ry="0.8" fill="#56763a"/><ellipse cx="62.7" cy="35.1" rx="3.5" ry="3.5" fill="#3f6a28"/><ellipse cx="113.1" cy="27.2" rx="1.7" ry="2.0" fill="#6f9c44"/><ellipse cx="119.4" cy="14.0" rx="2.3" ry="1.8" fill="#6f9c44"/><ellipse cx="177.2" cy="43.4" rx="3.6" ry="2.9" fill="#6a9440"/><ellipse cx="114.8" cy="22.6" rx="3.3" ry="2.0" fill="#6f9c44"/><ellipse cx="185.1" cy="111.9" rx="6.5" ry="2.0" fill="#a8bc80"/><ellipse cx="186.0" cy="78.5" rx="4.2" ry="1.7" fill="#3f6e28"/><ellipse cx="18.0" cy="48.3" rx="4.5" ry="2.5" fill="#8cc058"/><ellipse cx="141.6" cy="38.7" rx="3.3" ry="2.9" fill="#8cc058"/><ellipse cx="129.6" cy="50.2" rx="2.0" ry="1.4" fill="#a6d662"/><ellipse cx="77.4" cy="106.9" rx="6.6" ry="1.0" fill="#b0c488"/><ellipse cx="80.4" cy="45.7" rx="4.2" ry="2.5" fill="#3f6a28"/><ellipse cx="204.3" cy="34.6" rx="2.4" ry="1.5" fill="#3f6a28"/><ellipse cx="157.9" cy="5.3" rx="3.0" ry="1.6" fill="#8aa468"/><ellipse cx="8.6" cy="82.5" rx="4.7" ry="1.9" fill="#a8c878"/><ellipse cx="30.4" cy="72.3" rx="2.4" ry="3.4" fill="#5f8f38"/><ellipse cx="191.1" cy="75.5" rx="3.6" ry="1.8" fill="#6a9a3e"/><ellipse cx="44.8" cy="83.4" rx="4.5" ry="2.0" fill="#c0d098"/><ellipse cx="161.5" cy="10.8" rx="4.5" ry="3.0" fill="#b9c5b2"/><ellipse cx="151.6" cy="86.9" rx="4.0" ry="1.1" fill="#a8c878"/><ellipse cx="26.1" cy="41.8" rx="2.3" ry="1.7" fill="#5d8a3a"/><ellipse cx="43.2" cy="47.5" rx="1.8" ry="2.1" fill="#6f9c44"/><ellipse cx="41.1" cy="108.5" rx="5.2" ry="1.6" fill="#b0c488"/><ellipse cx="132.7" cy="17.6" rx="1.6" ry="2.5" fill="#6f9c44"/><ellipse cx="0.6" cy="108.2" rx="5.3" ry="1.8" fill="#cdcdb0"/><ellipse cx="40.4" cy="97.1" rx="3.3" ry="1.1" fill="#a8c478"/><ellipse cx="147.2" cy="99.1" rx="6.3" ry="0.9" fill="#a8c878"/><ellipse cx="54.1" cy="115.5" rx="4.2" ry="1.5" fill="#a8bc80"/><ellipse cx="9.3" cy="58.2" rx="4.0" ry="2.2" fill="#2f5a22"/><ellipse cx="39.5" cy="98.3" rx="4.9" ry="0.8" fill="#a8c878"/><ellipse cx="17.1" cy="55.9" rx="1.9" ry="2.1" fill="#2f5a22"/><ellipse cx="222.7" cy="93.3" rx="2.6" ry="1.7" fill="#a8c878"/><ellipse cx="174.8" cy="71.1" rx="3.8" ry="2.2" fill="#2a5220"/><ellipse cx="82.0" cy="83.0" rx="3.7" ry="0.9" fill="#c0d098"/><ellipse cx="208.5" cy="76.8" rx="2.2" ry="1.7" fill="#3f6e28"/><ellipse cx="98.2" cy="46.9" rx="2.4" ry="2.6" fill="#8cc058"/><ellipse cx="43.4" cy="8.1" rx="3.4" ry="1.5" fill="#5a7a40"/><ellipse cx="22.2" cy="48.0" rx="2.5" ry="3.2" fill="#6f9c44"/><ellipse cx="197.1" cy="38.7" rx="2.1" ry="2.3" fill="#2e5420"/><ellipse cx="126.6" cy="20.3" rx="4.3" ry="1.7" fill="#a9d271"/><ellipse cx="166.6" cy="120.4" rx="4.4" ry="2.7" fill="#a8bc80"/><ellipse cx="182.6" cy="112.5" rx="2.5" ry="3.1" fill="#a8bc80"/><ellipse cx="136.4" cy="45.1" rx="3.3" ry="2.2" fill="#a6d662"/><ellipse cx="135.3" cy="27.6" rx="2.8" ry="3.2" fill="#8cc058"/><ellipse cx="17.9" cy="121.5" rx="1.8" ry="1.7" fill="#86a45a"/><ellipse cx="190.7" cy="36.4" rx="1.7" ry="2.0" fill="#6a9440"/><ellipse cx="69.4" cy="-0.1" rx="2.6" ry="2.7" fill="#5a7a40"/><ellipse cx="206.5" cy="118.5" rx="3.1" ry="1.8" fill="#86a45a"/><ellipse cx="197.6" cy="79.1" rx="3.2" ry="3.0" fill="#3f6e28"/><ellipse cx="87.2" cy="71.8" rx="2.0" ry="3.0" fill="#8ab85a"/><ellipse cx="63.2" cy="84.0" rx="4.1" ry="0.9" fill="#a8c878"/><ellipse cx="69.7" cy="41.3" rx="4.0" ry="2.5" fill="#5d8a3a"/><ellipse cx="162.5" cy="33.6" rx="2.8" ry="3.2" fill="#3f6a28"/><ellipse cx="35.4" cy="22.6" rx="3.6" ry="3.4" fill="#5d8a3a"/><ellipse cx="192.9" cy="31.8" rx="4.3" ry="2.0" fill="#3f6a28"/><ellipse cx="70.8" cy="115.7" rx="2.5" ry="3.1" fill="#86a45a"/><ellipse cx="165.3" cy="117.7" rx="2.9" ry="2.8" fill="#56763a"/><ellipse cx="49.8" cy="79.3" rx="2.4" ry="1.4" fill="#2f5a22"/><ellipse cx="120.6" cy="11.5" rx="2.8" ry="2.7" fill="#8aa468"/><ellipse cx="168.9" cy="23.6" rx="3.8" ry="2.8" fill="#3f6a28"/><ellipse cx="98.4" cy="-2.0" rx="3.4" ry="1.7" fill="#a4b48c"/><ellipse cx="7.9" cy="76.4" rx="2.7" ry="2.1" fill="#264a1a"/><ellipse cx="93.9" cy="87.2" rx="6.5" ry="1.9" fill="#c0d098"/><ellipse cx="218.9" cy="116.2" rx="2.9" ry="1.5" fill="#86a45a"/><ellipse cx="30.4" cy="83.6" rx="4.9" ry="1.4" fill="#a8c878"/><ellipse cx="87.3" cy="32.5" rx="1.7" ry="2.3" fill="#6f9c44"/><ellipse cx="72.6" cy="53.5" rx="2.7" ry="1.7" fill="#a9d271"/><ellipse cx="212.9" cy="76.3" rx="4.3" ry="3.3" fill="#3f6e28"/><ellipse cx="158.3" cy="125.1" rx="2.3" ry="2.9" fill="#a8bc80"/><ellipse cx="217.4" cy="63.1" rx="4.1" ry="2.3" fill="#3f6e28"/><ellipse cx="114.9" cy="47.5" rx="1.7" ry="1.9" fill="#6f9c44"/><ellipse cx="200.8" cy="113.0" rx="3.1" ry="3.3" fill="#86a45a"/><ellipse cx="145.4" cy="85.7" rx="7.1" ry="1.7" fill="#a8c878"/><ellipse cx="116.8" cy="100.7" rx="6.2" ry="1.1" fill="#9ab070"/><ellipse cx="117.2" cy="103.0" rx="7.0" ry="1.9" fill="#cdcdb0"/><ellipse cx="98.9" cy="10.6" rx="2.1" ry="1.4" fill="#b9c5b2"/><ellipse cx="19.3" cy="90.9" rx="7.0" ry="1.7" fill="#a8c478"/><ellipse cx="140.0" cy="61.1" rx="2.8" ry="1.3" fill="#8ab85a"/><ellipse cx="27.6" cy="112.7" rx="2.3" ry="2.3" fill="#a8bc80"/><ellipse cx="98.4" cy="53.8" rx="4.5" ry="3.1" fill="#6f9c44"/><ellipse cx="146.8" cy="93.1" rx="3.8" ry="0.9" fill="#5e8040"/><ellipse cx="84.3" cy="53.1" rx="3.5" ry="1.4" fill="#3f6a28"/><ellipse cx="187.8" cy="100.9" rx="5.8" ry="1.0" fill="#cdcdb0"/><ellipse cx="71.1" cy="125.0" rx="4.1" ry="2.5" fill="#86a45a"/><ellipse cx="155.5" cy="117.5" rx="4.4" ry="3.3" fill="#86a45a"/><ellipse cx="218.9" cy="88.4" rx="6.2" ry="0.9" fill="#8cb860"/><ellipse cx="200.5" cy="85.4" rx="5.7" ry="1.5" fill="#5e8040"/><ellipse cx="180.5" cy="91.2" rx="5.8" ry="1.5" fill="#8cb860"/><ellipse cx="97.4" cy="97.2" rx="5.8" ry="2.0" fill="#5e8040"/><ellipse cx="212.1" cy="25.3" rx="3.1" ry="2.4" fill="#2e5420"/><ellipse cx="147.3" cy="38.8" rx="2.0" ry="2.3" fill="#a6d662"/><ellipse cx="72.4" cy="46.7" rx="3.4" ry="2.8" fill="#6f9c44"/><ellipse cx="21.7" cy="92.8" rx="4.6" ry="1.8" fill="#4a6a30"/><ellipse cx="193.1" cy="91.1" rx="5.4" ry="2.0" fill="#a8c878"/><ellipse cx="129.3" cy="125.6" rx="1.9" ry="1.8" fill="#88c050"/><ellipse cx="54.6" cy="93.6" rx="2.4" ry="0.9" fill="#5e8040"/><ellipse cx="64.4" cy="94.3" rx="5.6" ry="1.5" fill="#4a6a30"/><ellipse cx="89.7" cy="11.0" rx="2.8" ry="1.9" fill="#b9c5b2"/><ellipse cx="59.5" cy="119.9" rx="2.3" ry="3.1" fill="#86a45a"/><ellipse cx="142.6" cy="50.8" rx="2.7" ry="1.6" fill="#8cc058"/><ellipse cx="62.5" cy="49.3" rx="2.5" ry="2.4" fill="#6f9c44"/><ellipse cx="36.9" cy="101.9" rx="5.4" ry="1.8" fill="#b0c488"/><ellipse cx="62.6" cy="120.5" rx="3.2" ry="1.2" fill="#a8bc80"/><ellipse cx="168.3" cy="2.7" rx="3.5" ry="2.1" fill="#b9c5b2"/><ellipse cx="108.5" cy="92.7" rx="6.3" ry="2.0" fill="#5e8040"/><ellipse cx="23.7" cy="89.8" rx="4.3" ry="1.6" fill="#5e8040"/><ellipse cx="104.8" cy="78.9" rx="3.6" ry="3.4" fill="#5f8f38"/><ellipse cx="81.9" cy="74.3" rx="4.4" ry="2.0" fill="#2f5a22"/><ellipse cx="12.7" cy="103.9" rx="7.0" ry="1.3" fill="#cdcdb0"/><ellipse cx="58.5" cy="60.7" rx="3.8" ry="2.6" fill="#264a1a"/><ellipse cx="219.9" cy="38.6" rx="2.6" ry="1.4" fill="#2e5420"/><ellipse cx="206.4" cy="47.4" rx="4.3" ry="3.0" fill="#8ab85a"/><ellipse cx="165.1" cy="87.0" rx="5.1" ry="1.1" fill="#5e8040"/><ellipse cx="70.9" cy="78.0" rx="2.2" ry="3.2" fill="#5f8f38"/><ellipse cx="21.7" cy="57.9" rx="4.4" ry="2.7" fill="#5f8f38"/><ellipse cx="12.5" cy="4.5" rx="1.8" ry="3.2" fill="#8aa468"/><ellipse cx="136.5" cy="0.3" rx="2.7" ry="1.8" fill="#5a7a40"/><ellipse cx="86.5" cy="28.0" rx="4.5" ry="1.3" fill="#6f9c44"/><ellipse cx="150.4" cy="113.1" rx="2.5" ry="1.9" fill="#86a45a"/><ellipse cx="101.0" cy="81.4" rx="4.5" ry="0.7" fill="#a8c878"/><ellipse cx="141.4" cy="35.8" rx="3.6" ry="3.4" fill="#a6d662"/><ellipse cx="219.7" cy="-0.0" rx="2.3" ry="1.4" fill="#a4b48c"/><ellipse cx="78.6" cy="34.8" rx="2.1" ry="2.9" fill="#6f9c44"/><ellipse cx="155.5" cy="7.9" rx="4.3" ry="2.6" fill="#8aa468"/><ellipse cx="6.1" cy="-1.4" rx="2.7" ry="2.9" fill="#5a7a40"/><ellipse cx="120.6" cy="30.7" rx="3.8" ry="2.6" fill="#8cc058"/><ellipse cx="192.8" cy="114.0" rx="2.1" ry="2.8" fill="#56763a"/><ellipse cx="142.1" cy="58.9" rx="3.1" ry="1.4" fill="#8ab85a"/><ellipse cx="178.3" cy="109.9" rx="4.1" ry="2.0" fill="#cdcdb0"/><ellipse cx="183.1" cy="103.2" rx="4.4" ry="1.6" fill="#b0c488"/><ellipse cx="193.3" cy="-1.4" rx="1.9" ry="3.5" fill="#a4b48c"/><ellipse cx="222.7" cy="83.0" rx="7.2" ry="1.8" fill="#a8c878"/><ellipse cx="158.7" cy="117.4" rx="4.3" ry="2.6" fill="#56763a"/><ellipse cx="188.7" cy="1.0" rx="2.1" ry="3.4" fill="#a4b48c"/><ellipse cx="74.2" cy="4.1" rx="3.8" ry="2.2" fill="#a4b48c"/><ellipse cx="186.5" cy="11.5" rx="3.1" ry="2.4" fill="#b9c5b2"/><ellipse cx="203.1" cy="51.9" rx="2.7" ry="2.1" fill="#8ab85a"/><ellipse cx="213.3" cy="23.0" rx="4.0" ry="2.5" fill="#6a9440"/><ellipse cx="6.6" cy="28.1" rx="4.1" ry="3.1" fill="#3f6a28"/><ellipse cx="160.2" cy="25.8" rx="3.9" ry="3.0" fill="#2e5420"/><ellipse cx="107.3" cy="17.6" rx="3.7" ry="3.2" fill="#a9d271"/><ellipse cx="156.9" cy="100.5" rx="5.4" ry="0.9" fill="#cdcdb0"/><ellipse cx="96.1" cy="105.6" rx="3.8" ry="1.5" fill="#cdcdb0"/><ellipse cx="131.8" cy="44.1" rx="2.4" ry="2.4" fill="#a6d662"/><ellipse cx="209.5" cy="119.1" rx="2.6" ry="1.7" fill="#56763a"/><ellipse cx="92.2" cy="102.9" rx="2.5" ry="1.8" fill="#b0c488"/><ellipse cx="193.1" cy="3.0" rx="1.8" ry="3.2" fill="#5a7a40"/><ellipse cx="50.6" cy="76.5" rx="4.0" ry="2.2" fill="#8ab85a"/><ellipse cx="16.1" cy="11.0" rx="4.4" ry="2.5" fill="#b9c5b2"/><ellipse cx="40.0" cy="8.1" rx="3.6" ry="1.4" fill="#8aa468"/><ellipse cx="81.9" cy="123.6" rx="2.4" ry="1.8" fill="#a8bc80"/><ellipse cx="170.2" cy="124.1" rx="3.2" ry="1.3" fill="#56763a"/><ellipse cx="14.9" cy="53.6" rx="2.5" ry="3.1" fill="#8cc058"/><ellipse cx="98.8" cy="-2.6" rx="2.3" ry="3.5" fill="#b9c5b2"/><ellipse cx="9.8" cy="78.8" rx="3.2" ry="1.7" fill="#2f5a22"/><ellipse cx="134.1" cy="23.2" rx="2.5" ry="1.7" fill="#8cc058"/><ellipse cx="177.6" cy="107.4" rx="4.5" ry="1.3" fill="#cdcdb0"/><ellipse cx="39.9" cy="122.3" rx="2.2" ry="3.1" fill="#a8bc80"/><ellipse cx="29.5" cy="109.5" rx="5.5" ry="1.0" fill="#cdcdb0"/><ellipse cx="103.8" cy="92.9" rx="6.3" ry="2.0" fill="#5e8040"/><ellipse cx="81.1" cy="82.3" rx="4.6" ry="1.2" fill="#8cb860"/><ellipse cx="194.8" cy="8.9" rx="2.4" ry="1.3" fill="#b9c5b2"/><ellipse cx="8.5" cy="115.5" rx="2.8" ry="1.6" fill="#86a45a"/><ellipse cx="139.6" cy="32.1" rx="1.7" ry="1.5" fill="#8cc058"/><ellipse cx="56.8" cy="44.5" rx="2.8" ry="3.2" fill="#6f9c44"/><ellipse cx="42.5" cy="58.9" rx="3.6" ry="2.7" fill="#2f5a22"/><ellipse cx="182.6" cy="-2.9" rx="3.5" ry="1.7" fill="#b9c5b2"/><ellipse cx="23.5" cy="122.6" rx="2.7" ry="3.4" fill="#56763a"/><ellipse cx="74.4" cy="99.7" rx="3.2" ry="1.4" fill="#8cb860"/><ellipse cx="160.8" cy="94.8" rx="6.0" ry="0.8" fill="#8cb860"/><ellipse cx="20.0" cy="54.3" rx="3.6" ry="2.7" fill="#3f6a28"/><ellipse cx="216.5" cy="39.0" rx="1.7" ry="2.9" fill="#6a9440"/><ellipse cx="218.5" cy="67.6" rx="2.3" ry="2.8" fill="#3f6e28"/><ellipse cx="200.5" cy="32.4" rx="3.2" ry="1.7" fill="#8ab85a"/><ellipse cx="64.1" cy="18.9" rx="1.7" ry="3.4" fill="#5d8a3a"/><ellipse cx="86.9" cy="10.8" rx="2.2" ry="2.5" fill="#b9c5b2"/><ellipse cx="34.7" cy="3.1" rx="3.3" ry="1.5" fill="#b9c5b2"/><ellipse cx="201.3" cy="69.0" rx="2.2" ry="2.9" fill="#2a5220"/><ellipse cx="174.5" cy="119.3" rx="2.4" ry="2.6" fill="#86a45a"/><ellipse cx="180.1" cy="14.8" rx="4.4" ry="3.3" fill="#3f6a28"/><ellipse cx="108.8" cy="70.0" rx="3.0" ry="2.2" fill="#2f5a22"/><ellipse cx="206.3" cy="79.5" rx="4.3" ry="3.0" fill="#3f6e28"/><ellipse cx="46.2" cy="19.0" rx="2.4" ry="1.7" fill="#3f6a28"/><ellipse cx="37.6" cy="57.5" rx="3.6" ry="3.1" fill="#5f8f38"/><ellipse cx="207.9" cy="42.3" rx="3.8" ry="3.0" fill="#2e5420"/><ellipse cx="118.7" cy="103.1" rx="6.2" ry="1.1" fill="#b0c488"/><ellipse cx="168.1" cy="46.5" rx="2.8" ry="2.3" fill="#6a9440"/><ellipse cx="120.0" cy="124.8" rx="3.7" ry="3.0" fill="#6aa83a"/><ellipse cx="214.6" cy="28.2" rx="2.1" ry="3.2" fill="#6a9440"/><ellipse cx="7.5" cy="96.3" rx="5.7" ry="1.4" fill="#4a6a30"/><ellipse cx="59.7" cy="122.5" rx="1.6" ry="3.1" fill="#86a45a"/><ellipse cx="76.7" cy="-0.7" rx="3.6" ry="2.9" fill="#8aa468"/><ellipse cx="136.9" cy="-0.4" rx="4.1" ry="1.6" fill="#8aa468"/><ellipse cx="90.1" cy="78.9" rx="4.3" ry="2.4" fill="#2f5a22"/><ellipse cx="52.2" cy="32.7" rx="2.8" ry="3.3" fill="#5d8a3a"/><ellipse cx="150.0" cy="101.1" rx="7.1" ry="1.0" fill="#cdcdb0"/><ellipse cx="208.0" cy="103.9" rx="6.7" ry="1.2" fill="#cdcdb0"/><ellipse cx="215.8" cy="12.5" rx="3.3" ry="2.0" fill="#b9c5b2"/><ellipse cx="191.0" cy="74.1" rx="3.5" ry="2.6" fill="#3f6e28"/><ellipse cx="78.7" cy="8.4" rx="2.2" ry="2.7" fill="#5a7a40"/><ellipse cx="33.1" cy="78.2" rx="1.6" ry="2.8" fill="#8ab85a"/><ellipse cx="70.1" cy="108.8" rx="3.9" ry="1.5" fill="#cdcdb0"/><ellipse cx="140.0" cy="83.9" rx="3.6" ry="1.6" fill="#a8c878"/><ellipse cx="63.8" cy="98.5" rx="7.1" ry="2.0" fill="#8cb860"/><ellipse cx="4.0" cy="14.9" rx="1.9" ry="1.6" fill="#3f6a28"/><ellipse cx="191.2" cy="61.5" rx="4.0" ry="2.3" fill="#3f6e28"/><ellipse cx="110.4" cy="117.5" rx="2.5" ry="2.5" fill="#56763a"/><ellipse cx="176.6" cy="53.7" rx="2.2" ry="2.4" fill="#6a9440"/><ellipse cx="72.5" cy="100.7" rx="2.9" ry="1.1" fill="#cdcdb0"/><ellipse cx="126.5" cy="21.3" rx="3.5" ry="3.3" fill="#5d8a3a"/><ellipse cx="175.3" cy="124.5" rx="2.5" ry="3.5" fill="#86a45a"/><ellipse cx="30.8" cy="120.9" rx="2.3" ry="1.4" fill="#a8bc80"/><ellipse cx="1.2" cy="18.1" rx="2.4" ry="1.4" fill="#3f6a28"/><ellipse cx="179.4" cy="82.1" rx="5.9" ry="1.3" fill="#5e8040"/><ellipse cx="39.4" cy="95.8" rx="3.1" ry="1.8" fill="#5e8040"/><ellipse cx="120.7" cy="103.9" rx="4.1" ry="1.0" fill="#9ab070"/><ellipse cx="0.4" cy="34.1" rx="2.7" ry="2.3" fill="#3f6a28"/><ellipse cx="91.7" cy="3.5" rx="2.1" ry="2.9" fill="#b9c5b2"/><ellipse cx="71.9" cy="78.7" rx="2.3" ry="1.2" fill="#5f8f38"/><ellipse cx="137.1" cy="125.2" rx="3.5" ry="3.1" fill="#6aa83a"/><ellipse cx="80.4" cy="83.1" rx="5.5" ry="1.4" fill="#8cb860"/><ellipse cx="168.2" cy="61.4" rx="1.7" ry="1.6" fill="#3f6e28"/><ellipse cx="80.1" cy="25.7" rx="2.3" ry="2.9" fill="#5d8a3a"/><ellipse cx="95.7" cy="23.1" rx="4.2" ry="3.1" fill="#a9d271"/><ellipse cx="218.3" cy="27.2" rx="3.7" ry="2.4" fill="#3f6a28"/><ellipse cx="37.6" cy="67.0" rx="4.2" ry="1.8" fill="#2f5a22"/><ellipse cx="187.7" cy="95.5" rx="2.8" ry="1.1" fill="#c0d098"/><ellipse cx="191.6" cy="61.5" rx="2.9" ry="2.1" fill="#2a5220"/><ellipse cx="201.2" cy="32.7" rx="4.3" ry="2.0" fill="#3f6a28"/><ellipse cx="196.0" cy="1.8" rx="3.4" ry="2.9" fill="#b9c5b2"/><ellipse cx="22.2" cy="46.3" rx="2.0" ry="2.8" fill="#5d8a3a"/><ellipse cx="106.6" cy="71.4" rx="1.8" ry="1.5" fill="#5f8f38"/><ellipse cx="192.2" cy="27.3" rx="1.7" ry="2.4" fill="#3f6a28"/><ellipse cx="208.8" cy="92.6" rx="3.7" ry="1.9" fill="#5e8040"/><ellipse cx="63.8" cy="114.8" rx="3.5" ry="3.4" fill="#56763a"/><ellipse cx="25.2" cy="95.4" rx="3.5" ry="1.7" fill="#4a6a30"/><ellipse cx="51.1" cy="60.7" rx="1.8" ry="2.9" fill="#8ab85a"/><ellipse cx="185.2" cy="21.2" rx="2.2" ry="1.4" fill="#3f6a28"/><ellipse cx="59.0" cy="-0.0" rx="4.1" ry="2.3" fill="#a4b48c"/><ellipse cx="58.9" cy="25.0" rx="4.2" ry="1.7" fill="#8cc058"/><ellipse cx="140.4" cy="73.0" rx="2.8" ry="2.9" fill="#5f8f38"/><ellipse cx="84.8" cy="1.7" rx="4.2" ry="1.7" fill="#5a7a40"/><ellipse cx="156.8" cy="100.5" rx="5.8" ry="1.7" fill="#cdcdb0"/><ellipse cx="107.6" cy="105.6" rx="4.0" ry="1.8" fill="#b0c488"/><ellipse cx="123.8" cy="81.6" rx="5.7" ry="1.4" fill="#a8c878"/><ellipse cx="13.8" cy="51.5" rx="1.8" ry="2.9" fill="#8cc058"/><ellipse cx="153.1" cy="74.8" rx="3.7" ry="2.6" fill="#8ab85a"/><ellipse cx="142.7" cy="51.6" rx="3.7" ry="2.5" fill="#8cc058"/><ellipse cx="84.1" cy="122.3" rx="2.7" ry="3.5" fill="#86a45a"/><ellipse cx="1.9" cy="42.5" rx="2.3" ry="2.8" fill="#3f6a28"/><ellipse cx="74.3" cy="48.0" rx="1.9" ry="2.5" fill="#3f6a28"/><ellipse cx="87.2" cy="118.9" rx="1.5" ry="2.7" fill="#56763a"/><ellipse cx="211.2" cy="67.0" rx="2.3" ry="2.4" fill="#3f6e28"/><ellipse cx="6.4" cy="32.7" rx="4.3" ry="1.7" fill="#3f6a28"/><ellipse cx="49.9" cy="69.9" rx="3.6" ry="3.4" fill="#5f8f38"/><ellipse cx="142.0" cy="0.7" rx="2.6" ry="2.2" fill="#5a7a40"/><ellipse cx="185.5" cy="81.4" rx="5.1" ry="2.0" fill="#c0d098"/><ellipse cx="96.5" cy="114.1" rx="3.1" ry="2.8" fill="#86a45a"/><ellipse cx="164.3" cy="85.6" rx="6.1" ry="1.9" fill="#a8c878"/><ellipse cx="26.0" cy="59.2" rx="2.2" ry="2.1" fill="#5f8f38"/><ellipse cx="31.9" cy="13.3" rx="3.4" ry="1.8" fill="#8aa468"/><ellipse cx="174.9" cy="10.2" rx="3.6" ry="1.7" fill="#a4b48c"/><ellipse cx="127.1" cy="70.5" rx="3.0" ry="3.1" fill="#8ab85a"/><ellipse cx="54.4" cy="93.7" rx="6.3" ry="1.5" fill="#5e8040"/><ellipse cx="52.2" cy="-1.9" rx="2.7" ry="2.1" fill="#a4b48c"/><ellipse cx="173.7" cy="104.6" rx="2.4" ry="2.0" fill="#b0c488"/><ellipse cx="43.2" cy="60.7" rx="1.6" ry="3.1" fill="#264a1a"/><ellipse cx="10.1" cy="67.6" rx="3.1" ry="2.7" fill="#5f8f38"/><ellipse cx="209.3" cy="106.3" rx="3.1" ry="1.5" fill="#cdcdb0"/><ellipse cx="71.6" cy="109.4" rx="4.8" ry="1.3" fill="#cdcdb0"/><ellipse cx="84.8" cy="23.0" rx="2.7" ry="3.4" fill="#3f6a28"/><ellipse cx="4.8" cy="50.7" rx="3.9" ry="1.4" fill="#a9d271"/><ellipse cx="20.1" cy="80.8" rx="2.8" ry="1.9" fill="#5e8040"/><ellipse cx="198.5" cy="64.9" rx="4.3" ry="3.5" fill="#2a5220"/><ellipse cx="215.1" cy="74.4" rx="4.2" ry="3.0" fill="#3f6e28"/><ellipse cx="119.0" cy="4.2" rx="3.1" ry="2.2" fill="#8aa468"/><ellipse cx="218.3" cy="47.3" rx="3.7" ry="2.2" fill="#8ab85a"/><ellipse cx="187.7" cy="35.2" rx="3.7" ry="3.4" fill="#6a9440"/><ellipse cx="68.6" cy="60.4" rx="3.0" ry="1.3" fill="#5f8f38"/><ellipse cx="55.4" cy="58.0" rx="1.6" ry="2.5" fill="#264a1a"/><ellipse cx="210.4" cy="24.6" rx="4.2" ry="1.3" fill="#6a9440"/><ellipse cx="184.0" cy="21.5" rx="4.2" ry="2.9" fill="#3f6a28"/><ellipse cx="59.6" cy="2.0" rx="4.0" ry="2.1" fill="#b9c5b2"/><ellipse cx="39.6" cy="15.7" rx="3.3" ry="2.6" fill="#3f6a28"/><ellipse cx="84.4" cy="36.9" rx="1.6" ry="2.4" fill="#8cc058"/><ellipse cx="100.7" cy="41.5" rx="1.6" ry="1.9" fill="#3f6a28"/><ellipse cx="88.0" cy="126.1" rx="3.2" ry="2.0" fill="#a8bc80"/><ellipse cx="182.4" cy="95.3" rx="2.6" ry="1.5" fill="#8cb860"/><ellipse cx="186.3" cy="38.0" rx="3.0" ry="2.4" fill="#8ab85a"/><ellipse cx="157.2" cy="74.3" rx="4.5" ry="3.0" fill="#264a1a"/><ellipse cx="2.0" cy="43.1" rx="1.5" ry="3.3" fill="#3f6a28"/><ellipse cx="-0.1" cy="48.6" rx="2.0" ry="1.9" fill="#6f9c44"/><ellipse cx="192.0" cy="125.5" rx="1.5" ry="1.6" fill="#86a45a"/><ellipse cx="143.9" cy="102.7" rx="4.3" ry="1.6" fill="#b0c488"/><ellipse cx="107.5" cy="79.5" rx="4.4" ry="1.3" fill="#2f5a22"/><ellipse cx="11.0" cy="88.7" rx="5.9" ry="1.1" fill="#4a6a30"/><ellipse cx="178.7" cy="56.2" rx="3.6" ry="1.5" fill="#2a5220"/><ellipse cx="177.0" cy="46.3" rx="4.1" ry="1.4" fill="#3f6a28"/><ellipse cx="150.4" cy="104.6" rx="3.9" ry="0.8" fill="#cdcdb0"/><ellipse cx="1.3" cy="99.6" rx="5.5" ry="1.0" fill="#c0d098"/><ellipse cx="188.7" cy="50.6" rx="2.8" ry="1.3" fill="#2e5420"/><ellipse cx="11.4" cy="82.4" rx="7.0" ry="0.9" fill="#8cb860"/><ellipse cx="59.0" cy="112.1" rx="3.8" ry="2.9" fill="#56763a"/><ellipse cx="109.8" cy="115.7" rx="4.4" ry="2.7" fill="#a8bc80"/><ellipse cx="87.0" cy="81.4" rx="5.9" ry="0.8" fill="#a8c878"/><ellipse cx="90.4" cy="112.3" rx="3.0" ry="1.9" fill="#86a45a"/><ellipse cx="7.2" cy="61.1" rx="3.9" ry="3.5" fill="#264a1a"/><ellipse cx="182.6" cy="7.1" rx="2.6" ry="1.9" fill="#5a7a40"/><ellipse cx="207.9" cy="59.1" rx="3.4" ry="3.2" fill="#6a9a3e"/><ellipse cx="119.8" cy="65.0" rx="1.7" ry="2.2" fill="#2f5a22"/><ellipse cx="8.1" cy="86.4" rx="5.7" ry="2.0" fill="#5e8040"/><ellipse cx="107.2" cy="12.6" rx="3.3" ry="3.3" fill="#8aa468"/><ellipse cx="175.3" cy="94.6" rx="5.1" ry="1.4" fill="#a8c878"/><ellipse cx="95.4" cy="63.7" rx="4.2" ry="1.5" fill="#264a1a"/><ellipse cx="204.1" cy="16.7" rx="1.7" ry="1.2" fill="#8ab85a"/><ellipse cx="62.9" cy="104.7" rx="5.4" ry="1.5" fill="#b0c488"/><ellipse cx="114.4" cy="7.0" rx="2.3" ry="2.2" fill="#8aa468"/><ellipse cx="98.7" cy="53.5" rx="1.6" ry="2.8" fill="#6f9c44"/><ellipse cx="99.0" cy="118.2" rx="4.3" ry="1.6" fill="#56763a"/><ellipse cx="113.2" cy="21.2" rx="3.5" ry="1.6" fill="#6f9c44"/><ellipse cx="160.4" cy="118.4" rx="3.3" ry="1.6" fill="#86a45a"/><ellipse cx="102.4" cy="119.4" rx="3.1" ry="2.3" fill="#56763a"/><ellipse cx="174.9" cy="49.6" rx="3.9" ry="2.0" fill="#8ab85a"/><ellipse cx="23.2" cy="47.5" rx="4.5" ry="3.0" fill="#3f6a28"/><ellipse cx="202.1" cy="91.1" rx="3.8" ry="1.1" fill="#8cb860"/><ellipse cx="86.0" cy="111.9" rx="4.7" ry="1.0" fill="#86a45a"/><ellipse cx="5.8" cy="-0.7" rx="2.5" ry="3.0" fill="#8aa468"/><ellipse cx="101.0" cy="54.6" rx="1.8" ry="2.0" fill="#a9d271"/><ellipse cx="174.7" cy="65.5" rx="1.7" ry="2.1" fill="#6a9a3e"/><ellipse cx="63.5" cy="-3.0" rx="3.3" ry="3.0" fill="#8aa468"/><ellipse cx="221.5" cy="87.8" rx="3.5" ry="1.5" fill="#a8c878"/><ellipse cx="197.4" cy="113.6" rx="4.0" ry="2.4" fill="#86a45a"/><ellipse cx="44.2" cy="89.5" rx="3.3" ry="1.6" fill="#a8c478"/><ellipse cx="187.3" cy="52.8" rx="2.8" ry="2.6" fill="#3f6a28"/><ellipse cx="7.7" cy="83.6" rx="6.8" ry="1.0" fill="#c0d098"/><ellipse cx="67.2" cy="30.7" rx="3.0" ry="2.1" fill="#3f6a28"/><ellipse cx="25.1" cy="2.6" rx="3.2" ry="3.2" fill="#b9c5b2"/><ellipse cx="106.4" cy="6.8" rx="2.5" ry="2.5" fill="#8aa468"/><ellipse cx="118.6" cy="95.4" rx="6.3" ry="1.0" fill="#8cb860"/><ellipse cx="205.3" cy="98.6" rx="6.1" ry="0.8" fill="#8cb860"/><ellipse cx="33.8" cy="65.9" rx="2.0" ry="3.2" fill="#8ab85a"/><ellipse cx="114.0" cy="-1.6" rx="4.4" ry="1.5" fill="#b9c5b2"/><ellipse cx="15.8" cy="115.5" rx="4.0" ry="1.7" fill="#a8bc80"/><ellipse cx="6.9" cy="122.1" rx="3.8" ry="3.2" fill="#86a45a"/><ellipse cx="6.1" cy="81.9" rx="6.4" ry="2.1" fill="#a8c878"/><ellipse cx="58.8" cy="57.4" rx="3.4" ry="2.4" fill="#264a1a"/><ellipse cx="83.9" cy="101.7" rx="5.8" ry="2.0" fill="#b0c488"/><ellipse cx="109.3" cy="59.9" rx="3.7" ry="3.1" fill="#5f8f38"/><ellipse cx="43.6" cy="45.3" rx="2.1" ry="2.4" fill="#3f6a28"/><ellipse cx="165.9" cy="76.2" rx="2.1" ry="2.3" fill="#2a5220"/><ellipse cx="82.6" cy="21.4" rx="1.8" ry="2.0" fill="#5d8a3a"/><ellipse cx="7.9" cy="17.2" rx="3.8" ry="2.6" fill="#6f9c44"/><ellipse cx="94.6" cy="71.3" rx="3.7" ry="3.3" fill="#264a1a"/><ellipse cx="13.4" cy="38.2" rx="4.3" ry="3.3" fill="#a9d271"/><ellipse cx="32.4" cy="69.9" rx="1.5" ry="2.1" fill="#2f5a22"/><ellipse cx="9.9" cy="0.8" rx="2.6" ry="1.8" fill="#b9c5b2"/><ellipse cx="212.5" cy="27.3" rx="3.0" ry="3.1" fill="#3f6a28"/><ellipse cx="83.8" cy="37.4" rx="1.6" ry="1.8" fill="#8cc058"/><ellipse cx="133.1" cy="7.6" rx="4.3" ry="2.5" fill="#8aa468"/><ellipse cx="92.0" cy="73.3" rx="2.8" ry="1.6" fill="#5f8f38"/><ellipse cx="45.9" cy="69.3" rx="3.3" ry="1.5" fill="#264a1a"/><ellipse cx="128.3" cy="102.5" rx="4.9" ry="1.9" fill="#cdcdb0"/><ellipse cx="85.4" cy="59.4" rx="2.9" ry="2.9" fill="#264a1a"/><ellipse cx="118.5" cy="107.9" rx="5.3" ry="0.7" fill="#cdcdb0"/><ellipse cx="167.5" cy="120.3" rx="3.7" ry="3.1" fill="#a8bc80"/><ellipse cx="113.0" cy="84.2" rx="4.7" ry="0.9" fill="#8cb860"/><ellipse cx="38.4" cy="6.4" rx="3.7" ry="1.2" fill="#5a7a40"/><ellipse cx="37.3" cy="27.7" rx="4.1" ry="3.1" fill="#3f6a28"/><ellipse cx="19.9" cy="-1.0" rx="2.1" ry="3.5" fill="#8aa468"/><ellipse cx="60.0" cy="97.8" rx="5.5" ry="1.3" fill="#4a6a30"/><ellipse cx="90.8" cy="44.8" rx="1.9" ry="1.9" fill="#5d8a3a"/><ellipse cx="152.4" cy="86.5" rx="6.3" ry="2.0" fill="#c0d098"/><ellipse cx="100.0" cy="31.5" rx="2.6" ry="1.6" fill="#3f6a28"/><ellipse cx="142.2" cy="65.0" rx="3.4" ry="2.9" fill="#5f8f38"/><ellipse cx="92.8" cy="45.7" rx="4.4" ry="3.1" fill="#3f6a28"/><ellipse cx="-2.1" cy="34.9" rx="4.4" ry="1.9" fill="#8cc058"/><ellipse cx="45.0" cy="88.8" rx="6.9" ry="1.2" fill="#4a6a30"/><ellipse cx="106.1" cy="117.6" rx="2.9" ry="1.8" fill="#56763a"/><ellipse cx="56.9" cy="84.9" rx="6.4" ry="1.4" fill="#8cb860"/><ellipse cx="189.2" cy="68.2" rx="1.6" ry="3.4" fill="#3f6e28"/><ellipse cx="71.8" cy="98.4" rx="3.6" ry="1.9" fill="#c0d098"/><ellipse cx="206.3" cy="20.2" rx="1.9" ry="3.0" fill="#8ab85a"/><ellipse cx="156.0" cy="51.2" rx="3.1" ry="3.3" fill="#6f9c44"/><ellipse cx="-2.0" cy="94.4" rx="6.7" ry="1.5" fill="#5e8040"/><ellipse cx="208.1" cy="117.0" rx="2.8" ry="2.1" fill="#86a45a"/><ellipse cx="126.9" cy="97.3" rx="3.6" ry="0.9" fill="#a8c878"/><ellipse cx="15.7" cy="73.8" rx="1.8" ry="1.2" fill="#2f5a22"/><ellipse cx="4.1" cy="118.9" rx="2.9" ry="2.4" fill="#86a45a"/><ellipse cx="122.0" cy="22.7" rx="2.6" ry="2.0" fill="#6f9c44"/><ellipse cx="162.0" cy="56.0" rx="3.1" ry="1.8" fill="#2a5220"/><ellipse cx="120.6" cy="19.0" rx="2.3" ry="2.2" fill="#3f6a28"/><ellipse cx="27.0" cy="88.1" rx="3.5" ry="1.2" fill="#4a6a30"/><ellipse cx="216.4" cy="55.3" rx="2.5" ry="2.9" fill="#2a5220"/><ellipse cx="112.8" cy="72.3" rx="4.1" ry="2.8" fill="#5f8f38"/><ellipse cx="8.6" cy="55.8" rx="1.6" ry="2.9" fill="#2f5a22"/><ellipse cx="-1.3" cy="22.5" rx="2.9" ry="2.2" fill="#8cc058"/><ellipse cx="214.2" cy="72.9" rx="1.5" ry="2.2" fill="#3f6e28"/><ellipse cx="140.8" cy="23.8" rx="3.1" ry="2.2" fill="#a6d662"/><ellipse cx="79.6" cy="82.0" rx="2.7" ry="1.8" fill="#a8c878"/><ellipse cx="58.2" cy="92.6" rx="2.8" ry="0.8" fill="#a8c478"/><ellipse cx="16.5" cy="38.9" rx="2.5" ry="1.4" fill="#a9d271"/><ellipse cx="155.5" cy="26.1" rx="1.7" ry="3.1" fill="#6f9c44"/><ellipse cx="215.0" cy="90.6" rx="4.1" ry="1.8" fill="#8cb860"/><ellipse cx="164.0" cy="102.8" rx="2.9" ry="2.0" fill="#cdcdb0"/><ellipse cx="217.2" cy="43.3" rx="2.6" ry="3.3" fill="#6a9440"/><ellipse cx="137.0" cy="63.5" rx="2.1" ry="1.7" fill="#5f8f38"/><ellipse cx="37.6" cy="79.1" rx="3.8" ry="2.3" fill="#264a1a"/><ellipse cx="134.6" cy="49.7" rx="1.8" ry="1.7" fill="#a6d662"/><ellipse cx="67.8" cy="108.4" rx="2.4" ry="0.7" fill="#b0c488"/><ellipse cx="60.7" cy="64.6" rx="2.1" ry="2.5" fill="#2f5a22"/><ellipse cx="3.1" cy="109.7" rx="5.2" ry="1.1" fill="#cdcdb0"/><ellipse cx="59.4" cy="112.3" rx="4.0" ry="2.1" fill="#a8bc80"/><ellipse cx="74.6" cy="95.7" rx="2.9" ry="0.9" fill="#a8c878"/><ellipse cx="169.1" cy="77.5" rx="2.8" ry="2.2" fill="#2a5220"/><ellipse cx="-0.1" cy="101.4" rx="4.6" ry="1.0" fill="#9ab070"/><ellipse cx="107.3" cy="21.8" rx="3.6" ry="2.1" fill="#6f9c44"/><ellipse cx="206.1" cy="63.2" rx="4.1" ry="2.8" fill="#3f6e28"/><ellipse cx="119.5" cy="96.8" rx="3.7" ry="0.9" fill="#c0d098"/><ellipse cx="127.0" cy="62.6" rx="4.0" ry="1.5" fill="#2f5a22"/><ellipse cx="221.6" cy="36.2" rx="1.5" ry="3.5" fill="#2e5420"/><ellipse cx="34.5" cy="84.5" rx="2.6" ry="1.8" fill="#a8c878"/><ellipse cx="22.4" cy="67.7" rx="2.2" ry="3.3" fill="#5f8f38"/><ellipse cx="49.8" cy="64.7" rx="4.4" ry="2.0" fill="#2f5a22"/><ellipse cx="2.1" cy="42.6" rx="3.5" ry="3.3" fill="#5d8a3a"/><ellipse cx="188.4" cy="64.7" rx="4.5" ry="2.9" fill="#3f6e28"/><ellipse cx="78.3" cy="104.7" rx="4.3" ry="1.2" fill="#b0c488"/><ellipse cx="51.9" cy="42.9" rx="2.1" ry="2.3" fill="#8cc058"/><ellipse cx="192.6" cy="46.9" rx="4.3" ry="2.2" fill="#3f6a28"/><ellipse cx="126.3" cy="9.0" rx="4.0" ry="3.5" fill="#8aa468"/><ellipse cx="100.5" cy="-0.3" rx="4.5" ry="1.7" fill="#5a7a40"/><ellipse cx="-2.1" cy="64.3" rx="4.4" ry="2.9" fill="#5f8f38"/><ellipse cx="37.6" cy="41.2" rx="3.7" ry="3.3" fill="#3f6a28"/><ellipse cx="26.6" cy="35.9" rx="2.7" ry="2.0" fill="#3f6a28"/><ellipse cx="44.3" cy="92.7" rx="3.4" ry="1.7" fill="#a8c478"/><ellipse cx="13.1" cy="54.2" rx="4.4" ry="2.0" fill="#8cc058"/><ellipse cx="204.7" cy="106.6" rx="4.4" ry="1.4" fill="#b0c488"/><ellipse cx="72.9" cy="13.2" rx="3.5" ry="2.7" fill="#8aa468"/><ellipse cx="95.2" cy="39.1" rx="2.5" ry="2.0" fill="#3f6a28"/><ellipse cx="156.6" cy="-0.8" rx="4.2" ry="1.6" fill="#b9c5b2"/><ellipse cx="132.3" cy="47.6" rx="3.6" ry="1.9" fill="#8cc058"/><ellipse cx="218.4" cy="55.2" rx="3.3" ry="1.5" fill="#2a5220"/><ellipse cx="53.7" cy="119.1" rx="3.4" ry="2.5" fill="#86a45a"/><ellipse cx="175.1" cy="110.1" rx="6.4" ry="1.7" fill="#56763a"/><ellipse cx="27.8" cy="25.6" rx="4.1" ry="1.3" fill="#3f6a28"/><ellipse cx="188.7" cy="-0.5" rx="3.8" ry="1.9" fill="#5a7a40"/><ellipse cx="116.7" cy="95.8" rx="5.9" ry="0.9" fill="#5e8040"/><ellipse cx="186.9" cy="118.2" rx="3.6" ry="1.6" fill="#a8bc80"/><ellipse cx="11.6" cy="76.4" rx="2.8" ry="3.1" fill="#5f8f38"/><ellipse cx="209.8" cy="93.8" rx="7.2" ry="1.0" fill="#8cb860"/><ellipse cx="113.4" cy="43.8" rx="3.1" ry="1.3" fill="#6f9c44"/><ellipse cx="33.4" cy="28.5" rx="3.9" ry="3.2" fill="#3f6a28"/><ellipse cx="49.6" cy="106.1" rx="5.6" ry="1.2" fill="#b0c488"/><ellipse cx="129.3" cy="46.2" rx="4.2" ry="2.5" fill="#a6d662"/><ellipse cx="193.1" cy="14.8" rx="4.4" ry="1.7" fill="#3f6a28"/><ellipse cx="97.0" cy="100.5" rx="4.1" ry="1.6" fill="#b0c488"/><ellipse cx="140.8" cy="69.5" rx="3.7" ry="1.2" fill="#264a1a"/><ellipse cx="186.7" cy="125.2" rx="2.0" ry="3.0" fill="#86a45a"/><ellipse cx="200.8" cy="6.6" rx="3.3" ry="1.4" fill="#b9c5b2"/><ellipse cx="117.7" cy="11.8" rx="3.5" ry="2.7" fill="#a4b48c"/><ellipse cx="212.5" cy="101.1" rx="6.2" ry="1.4" fill="#b0c488"/><ellipse cx="173.2" cy="11.7" rx="1.8" ry="1.3" fill="#b9c5b2"/><ellipse cx="65.9" cy="34.5" rx="2.6" ry="1.5" fill="#8cc058"/><ellipse cx="75.0" cy="73.3" rx="3.8" ry="3.0" fill="#5f8f38"/><ellipse cx="102.4" cy="11.4" rx="1.9" ry="1.8" fill="#b9c5b2"/><ellipse cx="187.5" cy="62.3" rx="1.9" ry="2.3" fill="#3f6e28"/><ellipse cx="164.3" cy="2.6" rx="1.5" ry="1.7" fill="#b9c5b2"/><ellipse cx="29.1" cy="34.9" rx="4.3" ry="2.6" fill="#3f6a28"/><ellipse cx="220.4" cy="79.5" rx="1.7" ry="2.8" fill="#6a9a3e"/><ellipse cx="216.7" cy="42.0" rx="4.3" ry="2.3" fill="#6a9440"/><ellipse cx="171.8" cy="9.4" rx="2.2" ry="3.4" fill="#8aa468"/><ellipse cx="26.0" cy="77.8" rx="2.0" ry="2.3" fill="#8ab85a"/><ellipse cx="117.5" cy="92.7" rx="4.0" ry="1.7" fill="#c0d098"/><ellipse cx="157.4" cy="110.7" rx="4.0" ry="1.8" fill="#a8bc80"/><ellipse cx="47.8" cy="101.5" rx="6.0" ry="1.6" fill="#cdcdb0"/><ellipse cx="178.5" cy="43.3" rx="2.4" ry="1.3" fill="#6a9440"/><ellipse cx="203.4" cy="125.8" rx="3.0" ry="1.5" fill="#56763a"/><ellipse cx="14.3" cy="14.5" rx="4.0" ry="3.3" fill="#8cc058"/><ellipse cx="215.8" cy="44.6" rx="2.5" ry="2.8" fill="#3f6a28"/><ellipse cx="113.1" cy="12.7" rx="3.7" ry="3.3" fill="#b9c5b2"/><ellipse cx="198.3" cy="42.0" rx="4.4" ry="2.1" fill="#3f6a28"/><ellipse cx="68.7" cy="64.3" rx="2.4" ry="1.8" fill="#2f5a22"/><ellipse cx="32.9" cy="120.4" rx="2.2" ry="2.4" fill="#a8bc80"/><ellipse cx="58.0" cy="120.0" rx="3.5" ry="1.6" fill="#56763a"/><ellipse cx="145.4" cy="83.4" rx="3.3" ry="1.2" fill="#5e8040"/><ellipse cx="110.5" cy="5.2" rx="3.9" ry="1.5" fill="#5a7a40"/><ellipse cx="129.6" cy="88.3" rx="5.3" ry="1.9" fill="#8cb860"/><ellipse cx="219.3" cy="69.8" rx="1.7" ry="2.2" fill="#2a5220"/><ellipse cx="184.4" cy="19.1" rx="3.0" ry="2.7" fill="#6a9440"/><ellipse cx="38.5" cy="115.4" rx="3.5" ry="3.2" fill="#a8bc80"/><ellipse cx="185.1" cy="31.2" rx="3.8" ry="3.0" fill="#3f6a28"/><ellipse cx="152.3" cy="54.7" rx="3.7" ry="3.4" fill="#3f6a28"/><ellipse cx="112.4" cy="22.6" rx="3.5" ry="1.7" fill="#6f9c44"/><ellipse cx="156.1" cy="61.0" rx="2.6" ry="2.2" fill="#264a1a"/><ellipse cx="214.8" cy="50.1" rx="3.1" ry="3.1" fill="#8ab85a"/><ellipse cx="105.8" cy="47.2" rx="3.8" ry="2.7" fill="#3f6a28"/><ellipse cx="111.9" cy="31.6" rx="2.6" ry="1.4" fill="#3f6a28"/><ellipse cx="137.0" cy="70.4" rx="1.9" ry="3.3" fill="#2f5a22"/><ellipse cx="59.0" cy="57.3" rx="3.1" ry="2.4" fill="#2f5a22"/><ellipse cx="120.1" cy="126.0" rx="2.9" ry="3.2" fill="#88c050"/><ellipse cx="163.9" cy="36.9" rx="2.6" ry="3.2" fill="#6a9440"/><ellipse cx="68.1" cy="86.6" rx="4.6" ry="1.6" fill="#4a6a30"/><ellipse cx="17.4" cy="7.7" rx="2.4" ry="1.4" fill="#8aa468"/><ellipse cx="65.8" cy="58.3" rx="2.3" ry="2.3" fill="#2f5a22"/><ellipse cx="78.0" cy="48.1" rx="2.7" ry="2.9" fill="#3f6a28"/><ellipse cx="64.0" cy="126.8" rx="2.4" ry="2.6" fill="#a8bc80"/><ellipse cx="132.6" cy="46.4" rx="2.6" ry="1.3" fill="#a6d662"/><ellipse cx="76.0" cy="95.6" rx="6.9" ry="2.1" fill="#a8c878"/><ellipse cx="29.9" cy="58.6" rx="2.8" ry="2.7" fill="#5f8f38"/><ellipse cx="189.4" cy="104.2" rx="6.0" ry="1.4" fill="#b0c488"/><ellipse cx="42.5" cy="124.5" rx="4.1" ry="1.6" fill="#86a45a"/><ellipse cx="205.8" cy="76.8" rx="1.7" ry="3.3" fill="#3f6e28"/><ellipse cx="112.4" cy="38.8" rx="2.2" ry="3.3" fill="#3f6a28"/><ellipse cx="177.5" cy="87.5" rx="4.8" ry="1.4" fill="#5e8040"/><ellipse cx="135.4" cy="30.8" rx="4.3" ry="1.2" fill="#a6d662"/><ellipse cx="130.8" cy="1.8" rx="2.8" ry="1.7" fill="#b9c5b2"/></g>
<g filter="url(#fb)">
<rect x="5" y="0" width="1.6" height="62" fill="#4e3f30"/>
<rect x="24" y="0" width="3.5" height="84" fill="#5a4232"/>
<rect x="37" y="10" width="1.2" height="55" fill="#3f3a2e" opacity="0.7"/>
<rect x="48" y="15" width="1.2" height="50" fill="#4a3f32" opacity="0.7"/>
<rect x="58" y="20" width="1.2" height="55" fill="#4a3a2e" opacity="0.8"/>
<rect x="63" y="18" width="1.6" height="55" fill="#3f3a2e"/>
<rect x="68" y="10" width="1.4" height="60" fill="#6e6654"/>
<rect x="80" y="15" width="1.2" height="55" fill="#3f3a2e" opacity="0.7"/>
<rect x="91" y="0" width="2.5" height="76" fill="#4a3628"/>
<rect x="104" y="10" width="1.8" height="62" fill="#8c8470"/>
<rect x="110" y="0" width="1.6" height="62" fill="#5f4b3b"/>
<rect x="116" y="5" width="1.2" height="55" fill="#5a4a3a" opacity="0.8"/>
<rect x="122" y="0" width="1.6" height="62" fill="#6a4e3a"/>
<rect x="128" y="5" width="1.2" height="50" fill="#6a5a48" opacity="0.7"/>
<rect x="139" y="0" width="2.2" height="80" fill="#5a4636"/>
<rect x="147.5" y="0" width="10.5" height="124" fill="#34342f"/>
<rect x="150" y="0" width="5" height="124" fill="#7e7e78"/>
<rect x="150" y="14" width="4" height="3" fill="#45453f"/>
<rect x="151" y="40" width="4" height="2" fill="#45453f"/>
<rect x="150" y="62" width="4" height="3" fill="#45453f"/>
<rect x="151" y="95" width="4" height="3" fill="#45453f"/>
<polygon points="168,25 171,25 170,116 166,116" fill="#4a3c30"/>
<rect x="180" y="10" width="1.4" height="60" fill="#5a4a3a" opacity="0.8"/>
<polygon points="197,18 201,18 191,92 186,92" fill="#8a7a66"/>
<rect x="208" y="10" width="1.4" height="70" fill="#5a4a3a" opacity="0.7"/>
<rect x="131" y="68" width="15" height="11.5" fill="#1c1c22"/>
<rect x="111" y="73" width="9" height="12" fill="#6a4c4a"/>
<rect x="112" y="74" width="3" height="4" fill="#c8c0c0"/>
</g>
</svg></div>
<div class="a" style="left:78px;top:250px;width:73px;height:17px;background:#0b63cc;border-radius:9px;"></div>
<div class="t" style="top:253.84px;font-size:10px;line-height:10px;font-weight:700;color:#ffffff;letter-spacing:0.4px;left:89px;">В ротации</div>
<div class="a" style="left:238px;top:250px;width:20px;height:20px;background:rgba(40,44,56,0.78);border-radius:50%;"></div>
<svg class="a" style="left:238px;top:250px;width:20px;height:20px" viewBox="0 0 20 20"><polygon points="10.00,3.40 12.12,7.69 16.85,8.38 13.42,11.71 14.23,16.42 10.00,14.20 5.77,16.42 6.58,11.71 3.15,8.38 7.88,7.69" fill="none" stroke="#ffffff" stroke-width="1.35" stroke-linejoin="round"/></svg>
<div class="a" style="left:268px;top:250px;width:20px;height:20px;background:rgba(40,44,56,0.78);border-radius:50%;"></div>
<svg class="a" style="left:268px;top:250px;width:20px;height:20px" viewBox="0 0 20 20"><g fill="#ffffff"><circle cx="9.6" cy="5" r="2.15"/><circle cx="9.6" cy="10" r="2.15"/><circle cx="9.6" cy="15" r="2.15"/></g></svg>
<svg class="a" style="left:77.5px;top:390.5px;width:9.5px;height:12.5px;" viewBox="0 0 384 512" preserveAspectRatio="none"><path fill="#4a5068" d="M215.03 72.04L126.06 161H24c-13.26 0-24 10.74-24 24v144c0 13.25 10.74 24 24 24h102.06l88.97 88.95c15.01 15.01 40.97 4.46 40.97-16.97V89.02c0-21.47-25.98-31.98-40.97-16.98zm123.2 108.08c-11.58-6.33-26.19-2.16-32.61 9.45-6.39 11.61-2.16 26.2 9.45 32.61C327.98 229.28 336 242.62 336 257c0 14.38-8.02 27.72-20.92 34.81-11.61 6.41-15.84 21-9.45 32.61 6.43 11.66 21.05 15.8 32.61 9.45 28.230-15.55 45.77-45 45.77-76.88s-17.54-61.32-45.78-76.87z"/></svg>
<div class="a" style="left:98px;top:395px;width:158px;height:4px;background:#dddddf;border-radius:2px;"></div>
<div class="a" style="left:91px;top:390px;width:14px;height:14px;box-sizing:border-box;background:#fff;border:2px solid #9aa6e6;border-radius:50%;"></div>
<svg class="a" style="left:268px;top:390.5px;width:14px;height:12.5px;" viewBox="0 0 576 512" preserveAspectRatio="none"><path fill="#4a5068" d="M215.03 71.05L126.06 160H24c-13.26 0-24 10.74-24 24v144c0 13.25 10.74 24 24 24h102.06l88.97 88.95c15.01 15.01 40.97 4.46 40.97-16.97V88.02c0-21.46-25.96-31.98-40.97-16.97zm233.32-51.08c-11.17-7.33-26.18-4.24-33.51 6.95-7.34 11.17-4.22 26.18 6.95 33.51 66.27 43.49 105.82 116.6 105.82 195.58 0 78.98-39.55 152.09-105.82 195.58-11.17 7.32-14.29 22.34-6.95 33.5 7.04 10.71 21.93 14.56 33.51 6.95C528.27 439.58 576 351.33 576 256S528.27 72.43 448.35 19.970zM480 256c0-63.53-32.06-121.94-85.77-156.24-11.19-7.14-26.03-3.82-33.12 7.46s-3.78 26.21 7.41 33.36C408.27 165.97 432 209.11 432 256s-23.73 90.03-63.48 115.42c-11.19 7.14-14.5 22.07-7.41 33.36 6.51 10.36 21.12 15.14 33.12 7.46C447.94 377.94 480 319.54 480 256zm-141.77-76.87c-11.58-6.33-26.19-2.16-32.61 9.45-6.39 11.61-2.16 26.2 9.45 32.61C327.98 228.28 336 241.630 336 256c0 14.38-8.02 27.72-20.92 34.81-11.61 6.41-15.84 21-9.45 32.61 6.43 11.66 21.05 15.8 32.61 9.45 28.23-15.55 45.77-45 45.77-76.88s-17.54-61.32-45.78-76.87z"/></svg>
<div class="t" style="top:420.15px;font-size:14px;line-height:14px;font-weight:400;color:#333333;letter-spacing:0.45px;left:73px;">Активность</div>
<div class="a" style="left:243px;top:415px;width:50px;height:26px;background:#3c55c8;border-radius:13px;"></div>
<div class="a" style="left:268px;top:417px;width:22.5px;height:22px;background:#ffffff;border-radius:50%;"></div>
<div class="a" style="left:306px;top:232.4px;width:249px;height:224.5px;box-sizing:border-box;border:1px solid #cfcfcf;border-radius:4px;"></div>
<div class="a" style="left:315.5px;top:231.4px;width:183.5px;height:3px;background:#fefefd;"></div>
<div class="t" style="top:228.02px;font-size:12.5px;line-height:12.5px;font-weight:400;color:#8a8a8a;letter-spacing:0.72px;left:320px;">Информация о компоненте</div>
<div class="t" style="top:251.32px;font-size:12.5px;line-height:12.5px;font-weight:400;color:#535970;letter-spacing:0.6px;left:320px;">Имя:</div>
<div class="t" style="top:251.32px;font-size:12.5px;line-height:12.5px;font-weight:700;color:#3b4dc4;letter-spacing:0.45px;right:745.55px;text-decoration:underline;text-underline-offset:1.5px;">Image 001</div>
<div class="t" style="top:276.37px;font-size:12.5px;line-height:12.5px;font-weight:400;color:#535970;letter-spacing:0.6px;left:320px;">Длительность:</div>
<div class="t" style="top:276.37px;font-size:12.5px;line-height:12.5px;font-weight:700;color:#3b4dc4;letter-spacing:0.45px;right:745.55px;text-decoration:underline;text-underline-offset:1.5px;">15 сек</div>
<div class="t" style="top:301.42px;font-size:12.5px;line-height:12.5px;font-weight:400;color:#535970;letter-spacing:0.6px;left:320px;">Тип:</div>
<div class="t" style="top:301.42px;font-size:12.5px;line-height:12.5px;font-weight:700;color:#1a1a1a;letter-spacing:1.15px;right:744.85px;">Изображение</div>
<div class="t" style="top:326.47px;font-size:12.5px;line-height:12.5px;font-weight:400;color:#535970;letter-spacing:0.6px;left:320px;">Разрешение:</div>
<div class="t" style="top:326.47px;font-size:12.5px;line-height:12.5px;font-weight:700;color:#1a1a1a;letter-spacing:0.45px;right:745.55px;">2317 x 1307</div>
<div class="t" style="top:351.52px;font-size:12.5px;line-height:12.5px;font-weight:400;color:#535970;letter-spacing:0.6px;left:320px;">Размер:</div>
<div class="t" style="top:351.52px;font-size:12.5px;line-height:12.5px;font-weight:700;color:#1a1a1a;letter-spacing:0.45px;right:745.55px;">8.92 MB</div>
<div class="t" style="top:376.57px;font-size:12.5px;line-height:12.5px;font-weight:400;color:#535970;letter-spacing:0.6px;left:320px;">Автор:</div>
<div class="t" style="top:376.57px;font-size:12.5px;line-height:12.5px;font-weight:700;color:#1a1a1a;letter-spacing:0.45px;right:745.55px;">User</div>
<div class="t" style="top:401.62px;font-size:12.5px;line-height:12.5px;font-weight:400;color:#535970;letter-spacing:0.6px;left:320px;">Тэги:</div>
<div class="t" style="top:401.62px;font-size:12.5px;line-height:12.5px;font-weight:700;color:#1a1a1a;letter-spacing:0.45px;right:745.55px;">Travel</div>
<div class="t" style="top:426.67px;font-size:12.5px;line-height:12.5px;font-weight:400;color:#535970;letter-spacing:0.6px;left:320px;">Статистика:</div>
<div class="t" style="top:426.67px;font-size:12.5px;line-height:12.5px;font-weight:700;color:#f1a817;letter-spacing:0.45px;right:745.55px;">Выкл</div>
<div class="a" style="left:568px;top:232.4px;width:343px;height:224.5px;box-sizing:border-box;border:1px solid #cfcfcf;border-radius:4px;"></div>
<div class="a" style="left:578.0px;top:231.4px;width:164.5px;height:3px;background:#fefefd;"></div>
<div class="t" style="top:228.02px;font-size:12.5px;line-height:12.5px;font-weight:400;color:#8a8a8a;letter-spacing:0.87px;left:582.5px;">Настройка ограничений</div>
<div class="a" style="left:852px;top:224px;width:45px;height:18px;background:#3c55c8;border-radius:9px;"></div>
<svg class="a" style="left:868px;top:226.5px;width:13px;height:13px;" viewBox="0 0 512 512" preserveAspectRatio="none"><path fill="#ffffff" d="M487.4 315.7l-42.6-24.6c4.3-23.2 4.3-47 0-70.2l42.6-24.6c4.9-2.8 7.1-8.6 5.5-14-11.1-35.6-30-67.8-54.7-94.6-3.8-4.1-10-5.1-14.8-2.3L380.8 110c-17.9-15.4-38.5-27.3-60.8-35.1V25.8c0-5.6-3.9-10.5-9.4-11.7-36.7-8.2-74.3-7.8-109.2 0-5.5 1.2-9.4 6.1-9.4 11.7V75c-22.2 7.9-42.8 19.8-60.8 35.1L88.7 85.5c-4.9-2.8-11-1.9-14.8 2.3-24.7 26.7-43.6 58.9-54.7 94.6-1.7 5.4.6 11.2 5.5 14L67.3 221c-4.3 23.2-4.3 47 0 70.2l-42.6 24.6c-4.9 2.8-7.1 8.6-5.5 14 11.1 35.6 30 67.8 54.7 94.6 3.8 4.1 10 5.1 14.8 2.3l42.6-24.6c17.9 15.4 38.5 27.3 60.8 35.1v49.2c0 5.6 3.9 10.5 9.4 11.700 36.7 8.2 74.3 7.8 109.2 0 5.5-1.2 9.4-6.1 9.4-11.7v-49.2c22.2-7.9 42.8-19.8 60.8-35.1l42.6 24.6c4.9 2.8 11 1.9 14.8-2.3 24.7-26.7 43.6-58.9 54.7-94.6 1.5-5.5-.7-11.3-5.6-14.1zM256 336c-44.1 0-80-35.9-80-80s35.9-80 80-80 80 35.9 80 80-35.9 80-80 80z"/></svg>
<div class="a" style="left:569px;top:247px;width:341px;height:155.4px;overflow:hidden;">
<div class="a" style="left:13px;top:-20px;width:306px;height:48.5px;box-sizing:border-box;border:1px solid #cfcfcf;border-radius:4px;"></div>
<div class="t" style="left:28px;top:-0.88px;font-size:12.5px;line-height:12.5px;font-weight:400;color:#333;letter-spacing:0.3px;">С</div>
<div class="t" style="left:42px;top:-0.88px;font-size:12.5px;line-height:12.5px;font-weight:700;color:#3b4cc0;letter-spacing:0.45px;">01.01.2024</div>
<div class="a" style="left:166px;top:1px;width:1px;height:18px;background:#ececec;"></div>
<div class="t" style="left:193px;top:-0.88px;font-size:12.5px;line-height:12.5px;font-weight:400;color:#333;letter-spacing:0.3px;">ПО</div>
<div class="t" style="left:219.5px;top:-0.88px;font-size:12.5px;line-height:12.5px;font-weight:700;color:#3b4cc0;letter-spacing:0.45px;">31.01.2024</div>
<div class="a" style="left:13px;top:41.30000000000001px;width:306px;height:48px;box-sizing:border-box;border:1px solid #cfcfcf;border-radius:4px;"></div>
<div class="a" style="left:23px;top:40px;width:67px;height:3px;background:#fefefd;"></div>
<div class="t" style="left:27.5px;top:37.32px;font-size:12.5px;line-height:12.5px;font-weight:400;color:#8a8a8a;letter-spacing:0.75px;">По часам</div>
<div class="t" style="left:28px;top:60.42px;font-size:12.5px;line-height:12.5px;font-weight:400;color:#333;letter-spacing:0.3px;">С</div>
<div class="t" style="left:42px;top:60.42px;font-size:12.5px;line-height:12.5px;font-weight:700;color:#3b4cc0;letter-spacing:0.45px;">08:00</div>
<div class="a" style="left:166px;top:53px;width:1px;height:19px;background:#ececec;"></div>
<div class="t" style="left:193px;top:60.42px;font-size:12.5px;line-height:12.5px;font-weight:400;color:#333;letter-spacing:0.3px;">ПО</div>
<div class="t" style="left:219.5px;top:60.42px;font-size:12.5px;line-height:12.5px;font-weight:700;color:#3b4cc0;letter-spacing:0.45px;">16:00</div>
<div class="a" style="left:13px;top:102.39999999999998px;width:306px;height:60px;box-sizing:border-box;border:1px solid #cfcfcf;border-radius:4px;"></div>
<div class="a" style="left:23px;top:101px;width:93px;height:3px;background:#fefefd;"></div>
<div class="t" style="left:27.5px;top:98.42px;font-size:12.5px;line-height:12.5px;font-weight:400;color:#8a8a8a;letter-spacing:1.1px;">#назначение</div>
<div class="a" style="left:27px;top:117.30000000000001px;width:104px;height:23px;background:#ededed;border-radius:4px;"></div>
<div class="t" style="left:37.5px;top:124.34px;font-size:12px;line-height:12px;font-weight:400;color:#444;letter-spacing:0.35px;">#В разработке</div>
<div class="a" style="left:286px;top:119.19999999999999px;width:19px;height:19.5px;background:#3c55c8;border-radius:3px;"></div>
</div>
<svg class="a" style="left:860px;top:371px;width:9px;height:9.5px;" viewBox="0 0 448 512" preserveAspectRatio="none"><path fill="#ffffff" d="M416 208H272V64c0-17.67-14.33-32-32-32h-32c-17.67 0-32 14.33-32 32v144H32c-17.67 0-32 14.33-32 32v32c0 17.67 14.33 32 32 32h144v144c0 17.67 14.33 32 32 32h32c17.67 0 32-14.33 32-32V304h144c17.67 0 32-14.33 32-32v-32c0-17.67-14.33-32-32-32z"/></svg>
<div class="a" style="left:895px;top:324.6px;width:2.2px;height:77.8px;background:#1d5cc6;"></div>
<div class="a" style="left:924px;top:232.4px;width:342px;height:224.5px;box-sizing:border-box;border:1px solid #cfcfcf;border-radius:4px;"></div>
<div class="a" style="left:933.8px;top:231.4px;width:133.5px;height:3px;background:#fefefd;"></div>
<div class="t" style="top:228.02px;font-size:12.5px;line-height:12.5px;font-weight:400;color:#8a8a8a;letter-spacing:0.74px;left:938.3px;">Настройка событий</div>
<div class="a" style="left:1208px;top:224px;width:44px;height:18px;background:#3c55c8;border-radius:9px;"></div>
<svg class="a" style="left:1223.5px;top:226.5px;width:13px;height:13px;" viewBox="0 0 512 512" preserveAspectRatio="none"><path fill="#ffffff" d="M487.4 315.7l-42.6-24.6c4.3-23.2 4.3-47 0-70.2l42.6-24.6c4.9-2.8 7.1-8.6 5.5-14-11.1-35.6-30-67.8-54.7-94.6-3.8-4.1-10-5.1-14.8-2.3L380.8 110c-17.9-15.4-38.5-27.3-60.8-35.1V25.8c0-5.6-3.9-10.5-9.4-11.7-36.7-8.2-74.3-7.8-109.2 0-5.5 1.2-9.4 6.1-9.4 11.7V75c-22.2 7.9-42.8 19.8-60.8 35.1L88.7 85.5c-4.9-2.8-11-1.9-14.8 2.3-24.7 26.7-43.6 58.9-54.7 94.6-1.7 5.4.6 11.2 5.5 14L67.3 221c-4.3 23.2-4.3 47 0 70.2l-42.6 24.6c-4.9 2.8-7.1 8.6-5.5 14 11.1 35.6 30 67.8 54.7 94.6 3.8 4.1 10 5.1 14.8 2.3l42.6-24.6c17.9 15.4 38.5 27.3 60.8 35.1v49.2c0 5.6 3.9 10.5 9.4 11.700 36.7 8.2 74.3 7.8 109.2 0 5.5-1.2 9.4-6.1 9.4-11.7v-49.2c22.2-7.9 42.8-19.8 60.8-35.1l42.6 24.6c4.9 2.8 11 1.9 14.8-2.3 24.7-26.7 43.6-58.9 54.7-94.6 1.5-5.5-.7-11.3-5.6-14.1zM256 336c-44.1 0-80-35.9-80-80s35.9-80 80-80 80 35.9 80 80-35.9 80-80 80z"/></svg>
<div class="a" style="left:938px;top:260.2px;width:307px;height:34.5px;background:#f0f0f3;border-radius:5px;"></div>
<div class="a" style="left:951px;top:267px;width:54px;height:22px;background:#ececf0;border-radius:3px;"></div>
<div class="t" style="top:270.95px;font-size:14px;line-height:14px;font-weight:400;color:#4b55c2;letter-spacing:0.35px;left:957px;">Время</div>
<div class="t" style="top:272.77px;font-size:11.5px;line-height:11.5px;font-weight:700;color:#20b840;letter-spacing:0.3px;left:1071.4px;">Старт</div>
<div class="t" style="top:272.34px;font-size:12px;line-height:12px;font-weight:400;color:#2fbe4d;letter-spacing:0.2px;left:1109.5px;">09:00</div>
<div class="t" style="top:272.77px;font-size:11.5px;line-height:11.5px;font-weight:700;color:#3e4a6d;letter-spacing:0.3px;left:1146px;">Стоп</div>
<div class="t" style="top:272.34px;font-size:12px;line-height:12px;font-weight:400;color:#555a6a;letter-spacing:0.2px;left:1177.4px;">17:00</div>
<div class="a" style="left:1213px;top:266.8px;width:1px;height:22px;background:#d6d6d8;"></div>
<svg class="a" style="left:1223px;top:273.3px;width:9.6px;height:10px;" viewBox="0 0 352 512" preserveAspectRatio="none"><path fill="#e0263a" d="M242.72 256l100.07-100.07c12.28-12.28 12.28-32.19 0-44.48l-22.24-22.24c-12.28-12.28-32.19-12.28-44.48 0L176 189.28 75.93 89.21c-12.28-12.28-32.19-12.28-44.48 0L9.21 111.45c-12.28 12.28-12.28 32.19 0 44.48L109.28 256 9.210 356.07c-12.28 12.28-12.28 32.19 0 44.48l22.24 22.24c12.28 12.28 32.2 12.28 44.48 0L176 322.72l100.07 100.07c12.28 12.28 32.2 12.28 44.48 0l22.24-22.24c12.28-12.28 12.28-32.19 0-44.48L242.72 256z"/></svg>
<div class="a" style="left:5px;top:490px;width:1274px;height:264px;background:#fefefd;border-radius:12px;box-shadow:0 1px 0 #e3e3e3;"></div>
<div class="a" style="left:18px;top:614px;width:16px;height:16px;box-sizing:border-box;border:2px solid #cccccc;border-radius:3px;"></div>
<div class="t" style="top:616.15px;font-size:14px;line-height:14px;font-weight:700;color:#141414;left:53.5px;">2</div>
<div class="a" style="left:73px;top:522px;width:220px;height:130px;background:#dde8f6;border-radius:5px;"></div>
<svg class="a" style="left:138.5px;top:545.5px;width:89px;height:76px;" viewBox="0 0 576 512" preserveAspectRatio="none"><path fill="#333333" d="M215.03 71.05L126.06 160H24c-13.26 0-24 10.74-24 24v144c0 13.25 10.74 24 24 24h102.06l88.97 88.95c15.01 15.01 40.97 4.46 40.97-16.97V88.02c0-21.46-25.96-31.98-40.97-16.97zm233.32-51.08c-11.17-7.33-26.18-4.24-33.51 6.95-7.34 11.17-4.22 26.18 6.95 33.51 66.27 43.49 105.82 116.6 105.82 195.58 0 78.98-39.55 152.09-105.82 195.58-11.17 7.32-14.29 22.34-6.95 33.5 7.04 10.71 21.93 14.56 33.51 6.95C528.27 439.58 576 351.33 576 256S528.27 72.43 448.35 19.970zM480 256c0-63.53-32.06-121.94-85.77-156.24-11.19-7.14-26.03-3.82-33.12 7.46s-3.78 26.21 7.41 33.36C408.27 165.97 432 209.11 432 256s-23.73 90.03-63.48 115.42c-11.19 7.14-14.5 22.07-7.41 33.36 6.51 10.36 21.12 15.14 33.12 7.46C447.94 377.94 480 319.54 480 256zm-141.77-76.87c-11.58-6.33-26.19-2.16-32.61 9.45-6.39 11.61-2.16 26.2 9.45 32.61C327.98 228.28 336 241.630 336 256c0 14.38-8.02 27.72-20.92 34.81-11.61 6.41-15.84 21-9.45 32.61 6.43 11.66 21.05 15.8 32.61 9.45 28.23-15.55 45.77-45 45.77-76.88s-17.54-61.32-45.78-76.87z"/></svg>
<div class="a" style="left:78px;top:527px;width:73px;height:17px;background:#0b63cc;border-radius:9px;"></div>
<div class="t" style="top:530.83px;font-size:10px;line-height:10px;font-weight:700;color:#ffffff;letter-spacing:0.4px;left:89px;">В ротации</div>
<div class="a" style="left:238px;top:527px;width:20px;height:20px;background:#6b7183;border-radius:50%;"></div>
<svg class="a" style="left:238px;top:527px;width:20px;height:20px" viewBox="0 0 20 20"><polygon points="10.00,3.40 12.12,7.69 16.85,8.38 13.42,11.71 14.23,16.42 10.00,14.20 5.77,16.42 6.58,11.71 3.15,8.38 7.88,7.69" fill="none" stroke="#ffffff" stroke-width="1.35" stroke-linejoin="round"/></svg>
<div class="a" style="left:268px;top:527px;width:20px;height:20px;background:#6b7183;border-radius:50%;"></div>
<svg class="a" style="left:268px;top:527px;width:20px;height:20px" viewBox="0 0 20 20"><g fill="#ffffff"><circle cx="9.6" cy="5" r="2.15"/><circle cx="9.6" cy="10" r="2.15"/><circle cx="9.6" cy="15" r="2.15"/></g></svg>
<svg class="a" style="left:77.5px;top:667.5px;width:9.5px;height:12.5px;" viewBox="0 0 384 512" preserveAspectRatio="none"><path fill="#4a5068" d="M215.03 72.04L126.06 161H24c-13.26 0-24 10.74-24 24v144c0 13.25 10.74 24 24 24h102.06l88.97 88.95c15.01 15.01 40.97 4.46 40.97-16.97V89.02c0-21.47-25.98-31.98-40.97-16.98zm123.2 108.08c-11.58-6.33-26.19-2.16-32.61 9.45-6.39 11.61-2.16 26.2 9.45 32.61C327.98 229.28 336 242.62 336 257c0 14.38-8.02 27.72-20.92 34.81-11.61 6.41-15.84 21-9.45 32.61 6.43 11.66 21.05 15.8 32.61 9.45 28.230-15.55 45.77-45 45.77-76.88s-17.54-61.32-45.78-76.87z"/></svg>
<div class="a" style="left:98px;top:672px;width:158px;height:4px;background:#bdbec3;border-radius:2px;"></div>
<div class="a" style="left:91px;top:667px;width:14px;height:14px;box-sizing:border-box;background:#fff;border:2px solid #3c55c8;border-radius:50%;"></div>
<svg class="a" style="left:268px;top:667.5px;width:14px;height:12.5px;" viewBox="0 0 576 512" preserveAspectRatio="none"><path fill="#4a5068" d="M215.03 71.05L126.06 160H24c-13.26 0-24 10.74-24 24v144c0 13.25 10.74 24 24 24h102.06l88.97 88.95c15.01 15.01 40.97 4.46 40.97-16.97V88.02c0-21.46-25.96-31.98-40.97-16.97zm233.32-51.08c-11.17-7.33-26.18-4.24-33.51 6.95-7.34 11.17-4.22 26.18 6.95 33.51 66.27 43.49 105.82 116.6 105.82 195.58 0 78.98-39.55 152.09-105.82 195.58-11.17 7.32-14.29 22.34-6.95 33.5 7.04 10.71 21.93 14.56 33.51 6.95C528.27 439.58 576 351.33 576 256S528.27 72.43 448.35 19.970zM480 256c0-63.53-32.06-121.94-85.77-156.24-11.19-7.14-26.03-3.82-33.12 7.46s-3.78 26.21 7.41 33.36C408.27 165.97 432 209.11 432 256s-23.73 90.03-63.48 115.42c-11.19 7.14-14.5 22.07-7.41 33.36 6.51 10.36 21.12 15.14 33.12 7.46C447.94 377.94 480 319.54 480 256zm-141.77-76.87c-11.58-6.33-26.19-2.16-32.61 9.45-6.39 11.61-2.16 26.2 9.45 32.61C327.98 228.28 336 241.630 336 256c0 14.38-8.02 27.72-20.92 34.81-11.61 6.41-15.84 21-9.45 32.61 6.43 11.66 21.05 15.8 32.61 9.45 28.23-15.55 45.77-45 45.77-76.88s-17.54-61.32-45.78-76.87z"/></svg>
<div class="t" style="top:697.15px;font-size:14px;line-height:14px;font-weight:400;color:#333333;letter-spacing:0.45px;left:73px;">Активность</div>
<div class="a" style="left:243px;top:692px;width:50px;height:26px;background:#3c55c8;border-radius:13px;"></div>
<div class="a" style="left:268px;top:694px;width:22.5px;height:22px;background:#ffffff;border-radius:50%;"></div>
<div class="a" style="left:306px;top:510.4px;width:249px;height:223.6px;box-sizing:border-box;border:1px solid #cfcfcf;border-radius:4px;"></div>
<div class="a" style="left:315.5px;top:509.4px;width:183.5px;height:3px;background:#fefefd;"></div>
<div class="t" style="top:506.02px;font-size:12.5px;line-height:12.5px;font-weight:400;color:#8a8a8a;letter-spacing:0.72px;left:320px;">Информация о компоненте</div>
<div class="t" style="top:529.32px;font-size:12.5px;line-height:12.5px;font-weight:400;color:#535970;letter-spacing:0.6px;left:320px;">Имя:</div>
<div class="t" style="top:529.32px;font-size:12.5px;line-height:12.5px;font-weight:700;color:#3b4dc4;letter-spacing:0.16px;right:745.84px;text-decoration:underline;text-underline-offset:1.5px;">Born in the USSR</div>
<div class="t" style="top:554.37px;font-size:12.5px;line-height:12.5px;font-weight:400;color:#535970;letter-spacing:0.6px;left:320px;">Длительность:</div>
<div class="t" style="top:554.37px;font-size:12.5px;line-height:12.5px;font-weight:700;color:#1a1a1a;letter-spacing:0.45px;right:745.55px;">04:25 мин</div>
<div class="t" style="top:579.42px;font-size:12.5px;line-height:12.5px;font-weight:400;color:#535970;letter-spacing:0.6px;left:320px;">Тип:</div>
<div class="t" style="top:579.42px;font-size:12.5px;line-height:12.5px;font-weight:700;color:#1a1a1a;letter-spacing:0.45px;right:745.55px;">Аудио</div>
<div class="t" style="top:604.47px;font-size:12.5px;line-height:12.5px;font-weight:400;color:#535970;letter-spacing:0.6px;left:320px;">Разрешение:</div>
<div class="t" style="top:604.47px;font-size:12.5px;line-height:12.5px;font-weight:700;color:#1a1a1a;letter-spacing:0.45px;right:745.55px;">—</div>
<div class="t" style="top:629.52px;font-size:12.5px;line-height:12.5px;font-weight:400;color:#535970;letter-spacing:0.6px;left:320px;">Размер:</div>
<div class="t" style="top:629.52px;font-size:12.5px;line-height:12.5px;font-weight:700;color:#1a1a1a;letter-spacing:0.45px;right:745.55px;">4.04 MB</div>
<div class="t" style="top:654.57px;font-size:12.5px;line-height:12.5px;font-weight:400;color:#535970;letter-spacing:0.6px;left:320px;">Автор:</div>
<div class="t" style="top:654.57px;font-size:12.5px;line-height:12.5px;font-weight:700;color:#1a1a1a;letter-spacing:0.45px;right:745.55px;">User</div>
<div class="t" style="top:679.62px;font-size:12.5px;line-height:12.5px;font-weight:400;color:#535970;letter-spacing:0.6px;left:320px;">Тэги:</div>
<div class="t" style="top:679.62px;font-size:12.5px;line-height:12.5px;font-weight:700;color:#1a1a1a;letter-spacing:0.45px;right:745.55px;">Muzic</div>
<div class="t" style="top:704.67px;font-size:12.5px;line-height:12.5px;font-weight:400;color:#535970;letter-spacing:0.6px;left:320px;">Статистика:</div>
<div class="t" style="top:704.67px;font-size:12.5px;line-height:12.5px;font-weight:700;color:#f1a817;letter-spacing:0.45px;right:745.55px;">Выкл</div>
<div class="a" style="left:568px;top:510.4px;width:343px;height:223.6px;box-sizing:border-box;border:1px solid #cfcfcf;border-radius:4px;"></div>
<div class="a" style="left:578.0px;top:509.4px;width:164.5px;height:3px;background:#fefefd;"></div>
<div class="t" style="top:506.02px;font-size:12.5px;line-height:12.5px;font-weight:400;color:#8a8a8a;letter-spacing:0.87px;left:582.5px;">Настройка ограничений</div>
<div class="a" style="left:852px;top:502px;width:45px;height:18px;background:#3c55c8;border-radius:9px;"></div>
<svg class="a" style="left:868px;top:504.5px;width:13px;height:13px;" viewBox="0 0 512 512" preserveAspectRatio="none"><path fill="#ffffff" d="M487.4 315.7l-42.6-24.6c4.3-23.2 4.3-47 0-70.2l42.6-24.6c4.9-2.8 7.1-8.6 5.5-14-11.1-35.6-30-67.8-54.7-94.6-3.8-4.1-10-5.1-14.8-2.3L380.8 110c-17.9-15.4-38.5-27.3-60.8-35.1V25.8c0-5.6-3.9-10.5-9.4-11.7-36.7-8.2-74.3-7.8-109.2 0-5.5 1.2-9.4 6.1-9.4 11.7V75c-22.2 7.9-42.8 19.8-60.8 35.1L88.7 85.5c-4.9-2.8-11-1.9-14.8 2.3-24.7 26.7-43.6 58.9-54.7 94.6-1.7 5.4.6 11.2 5.5 14L67.3 221c-4.3 23.2-4.3 47 0 70.2l-42.6 24.6c-4.9 2.8-7.1 8.6-5.5 14 11.1 35.6 30 67.8 54.7 94.6 3.8 4.1 10 5.1 14.8 2.3l42.6-24.6c17.9 15.4 38.5 27.3 60.8 35.1v49.2c0 5.6 3.9 10.5 9.4 11.700 36.7 8.2 74.3 7.8 109.2 0 5.5-1.2 9.4-6.1 9.4-11.7v-49.2c22.2-7.9 42.8-19.8 60.8-35.1l42.6 24.6c4.9 2.8 11 1.9 14.8-2.3 24.7-26.7 43.6-58.9 54.7-94.6 1.5-5.5-.7-11.3-5.6-14.1zM256 336c-44.1 0-80-35.9-80-80s35.9-80 80-80 80 35.9 80 80-35.9 80-80 80z"/></svg>
<div class="a" style="left:582px;top:538.4px;width:308px;height:47.5px;box-sizing:border-box;border:1px solid #cfcfcf;border-radius:4px;"></div>
<div class="a" style="left:592.0px;top:537.4px;width:111.5px;height:3px;background:#fefefd;"></div>
<div class="t" style="top:534.42px;font-size:12.5px;line-height:12.5px;font-weight:400;color:#8a8a8a;letter-spacing:0.7px;left:596.5px;">По дням недели</div>
<div class="t" style="top:556.62px;font-size:12.5px;line-height:12.5px;font-weight:700;color:#3b4cc0;letter-spacing:0.45px;left:597px;">Все дни</div>
<div class="a" style="left:924px;top:510.4px;width:342px;height:223.6px;box-sizing:border-box;border:1px solid #cfcfcf;border-radius:4px;"></div>
<div class="a" style="left:933.8px;top:509.4px;width:133.5px;height:3px;background:#fefefd;"></div>
<div class="t" style="top:506.02px;font-size:12.5px;line-height:12.5px;font-weight:400;color:#8a8a8a;letter-spacing:0.74px;left:938.3px;">Настройка событий</div>
<div class="a" style="left:1208px;top:502px;width:44px;height:18px;background:#3c55c8;border-radius:9px;"></div>
<svg class="a" style="left:1223.5px;top:504.5px;width:13px;height:13px;" viewBox="0 0 512 512" preserveAspectRatio="none"><path fill="#ffffff" d="M487.4 315.7l-42.6-24.6c4.3-23.2 4.3-47 0-70.2l42.6-24.6c4.9-2.8 7.1-8.6 5.5-14-11.1-35.6-30-67.8-54.7-94.6-3.8-4.1-10-5.1-14.8-2.3L380.8 110c-17.9-15.4-38.5-27.3-60.8-35.1V25.8c0-5.6-3.9-10.5-9.4-11.7-36.7-8.2-74.3-7.8-109.2 0-5.5 1.2-9.4 6.1-9.4 11.7V75c-22.2 7.9-42.8 19.8-60.8 35.1L88.7 85.5c-4.9-2.8-11-1.9-14.8 2.3-24.7 26.7-43.6 58.9-54.7 94.6-1.7 5.4.6 11.2 5.5 14L67.3 221c-4.3 23.2-4.3 47 0 70.2l-42.6 24.6c-4.9 2.8-7.1 8.6-5.5 14 11.1 35.6 30 67.8 54.7 94.6 3.8 4.1 10 5.1 14.8 2.3l42.6-24.6c17.9 15.4 38.5 27.3 60.8 35.1v49.2c0 5.6 3.9 10.5 9.4 11.700 36.7 8.2 74.3 7.8 109.2 0 5.5-1.2 9.4-6.1 9.4-11.7v-49.2c22.2-7.9 42.8-19.8 60.8-35.1l42.6 24.6c4.9 2.8 11 1.9 14.8-2.3 24.7-26.7 43.6-58.9 54.7-94.6 1.5-5.5-.7-11.3-5.6-14.1zM256 336c-44.1 0-80-35.9-80-80s35.9-80 80-80 80 35.9 80 80-35.9 80-80 80z"/></svg>
<div class="t" style="top:540.07px;font-size:13.5px;line-height:13.5px;font-weight:400;color:#333333;letter-spacing:0.55px;left:938.3px;">События не настроены...</div>
<div class="a" style="left:5px;top:768px;width:1274px;height:264px;background:#fefefd;border-radius:12px;box-shadow:0 1px 0 #e3e3e3;"></div>
<div class="a" style="left:18px;top:891px;width:16px;height:16px;box-sizing:border-box;border:2px solid #cccccc;border-radius:3px;"></div>
<div class="t" style="top:893.15px;font-size:14px;line-height:14px;font-weight:700;color:#141414;left:53.5px;">3</div>
<div class="a" style="left:73px;top:800px;width:220px;height:130px;background:#dde8f6;border-radius:5px;"></div>
<div class="a" style="left:73px;top:800px;width:220px;height:123px;overflow:hidden;border-radius:5px 5px 0 0;"><svg class="a" style="left:0;top:0px;width:220px;height:123px" viewBox="0 0 220 123" preserveAspectRatio="none">
<defs>
<filter id="eb" x="-10%" y="-10%" width="120%" height="120%"><feGaussianBlur stdDeviation="1.8"/></filter>
<filter id="eb3" x="-10%" y="-10%" width="120%" height="120%"><feGaussianBlur stdDeviation="1.0"/></filter>
<filter id="eb2" x="-30%" y="-30%" width="160%" height="160%"><feGaussianBlur stdDeviation="5"/></filter>
</defs>
<rect width="220" height="123" fill="#dd7553"/>
<g filter="url(#eb)">
<polygon points="44,0 97,0 97,123 38,123" fill="#5c57d8"/>
<polygon points="212,50 240,50 212,123 182,123" fill="#5652d4"/>
<rect x="0" y="0" width="38" height="68" fill="#dcd8e0"/>
<rect x="25" y="24" width="12" height="15" fill="#d8805e"/>
<rect x="25" y="50" width="12" height="18" fill="#d8805e"/>
<rect x="5" y="29" width="10" height="10" fill="#8f7fd0"/>
<rect x="2" y="50" width="10" height="16" fill="#a088c0"/>
<rect x="36" y="0" width="9" height="70" fill="#e06e4c"/>
<rect x="0" y="39" width="37" height="11" fill="#ecebef"/>
<rect x="14" y="24" width="11" height="44" fill="#e8e6ec"/>
<rect x="45" y="0" width="15" height="67" fill="#ececf0"/>
<rect x="45" y="0" width="45" height="12" fill="#ececf0"/>
<rect x="60" y="26" width="30" height="14" fill="#ececf0"/>
<rect x="45" y="53" width="45" height="14" fill="#ececf0"/>
<rect x="97" y="0" width="14" height="62" fill="#e8e6ee"/>
<polygon points="100,0 112,0 140,50 130,60" fill="#e8e6ee"/>
<polygon points="97,0 112,0 112,10 97,25" fill="#5c57d8"/>
<rect x="138" y="0" width="15" height="62" fill="#e4e2e8"/>
<path d="M214 14 A27 27 0 1 0 221 40" fill="none" stroke="#e6e2e4" stroke-width="14"/>
<rect x="186" y="26" width="34" height="13" fill="#e6e2e4"/>
<polygon points="-5,67 45,67 38,123 -5,123" fill="#d08a6a"/>
<ellipse cx="26" cy="92" rx="13" ry="24" fill="#dcae8a"/>
<polygon points="50,68 58,64 66,80 55,82" fill="#3b37c0"/>
<polygon points="60,112 66,98 72,123 58,123" fill="#a9a3e6"/>
<polygon points="73,65 80,65 86,85 76,85" fill="#9088e0"/>
</g>
<g filter="url(#eb3)">
<polygon points="98,42 112,32 121,60 105,70" fill="#d63a45"/>
<polygon points="101,48 111,40 117,60 104,68" fill="#3a49b8" opacity="0.7"/>
<rect x="104" y="50" width="4" height="4" fill="#f0f0f0"/>
<path d="M106 50 Q126 44 148 50 L156 123 L102 123 Z" fill="#f0eeee"/>
<ellipse cx="126" cy="33" rx="9" ry="12" fill="#c99c82"/>
<ellipse cx="126" cy="23" rx="9.5" ry="5" fill="#2a201c"/>
<ellipse cx="127" cy="41" rx="7" ry="5" fill="#5a3a2a"/>
<rect x="141" y="54" width="6" height="12" fill="#1b1b1e"/>
<polygon points="139,66 158,64 153,92 140,92" fill="#e31c26"/>
<ellipse cx="150" cy="96" rx="9" ry="4" fill="#9a6a52"/>
<polygon points="100,60 112,58 114,90 104,92" fill="#c0907a"/>
</g>
</svg></div>
<div class="a" style="left:78px;top:805px;width:73px;height:17px;background:#0b63cc;border-radius:9px;"></div>
<div class="t" style="top:808.83px;font-size:10px;line-height:10px;font-weight:700;color:#ffffff;letter-spacing:0.4px;left:89px;">В ротации</div>
<div class="a" style="left:238px;top:805px;width:20px;height:20px;background:rgba(40,44,56,0.78);border-radius:50%;"></div>
<svg class="a" style="left:238px;top:805px;width:20px;height:20px" viewBox="0 0 20 20"><polygon points="10.00,3.40 12.12,7.69 16.85,8.38 13.42,11.71 14.23,16.42 10.00,14.20 5.77,16.42 6.58,11.71 3.15,8.38 7.88,7.69" fill="none" stroke="#ffffff" stroke-width="1.35" stroke-linejoin="round"/></svg>
<div class="a" style="left:268px;top:805px;width:20px;height:20px;background:rgba(40,44,56,0.78);border-radius:50%;"></div>
<svg class="a" style="left:268px;top:805px;width:20px;height:20px" viewBox="0 0 20 20"><g fill="#ffffff"><circle cx="9.6" cy="5" r="2.15"/><circle cx="9.6" cy="10" r="2.15"/><circle cx="9.6" cy="15" r="2.15"/></g></svg>
<svg class="a" style="left:77.5px;top:945.5px;width:9.5px;height:12.5px;" viewBox="0 0 384 512" preserveAspectRatio="none"><path fill="#4a5068" d="M215.03 72.04L126.06 161H24c-13.26 0-24 10.74-24 24v144c0 13.25 10.74 24 24 24h102.06l88.97 88.95c15.01 15.01 40.97 4.46 40.97-16.97V89.02c0-21.47-25.98-31.98-40.97-16.98zm123.2 108.08c-11.58-6.33-26.19-2.16-32.61 9.45-6.39 11.61-2.16 26.2 9.45 32.61C327.98 229.28 336 242.62 336 257c0 14.38-8.02 27.72-20.92 34.81-11.61 6.41-15.84 21-9.45 32.61 6.43 11.66 21.05 15.8 32.61 9.45 28.230-15.55 45.77-45 45.77-76.88s-17.54-61.32-45.78-76.87z"/></svg>
<div class="a" style="left:98px;top:950px;width:158px;height:4px;background:#bdbec3;border-radius:2px;"></div>
<div class="a" style="left:91px;top:945px;width:14px;height:14px;box-sizing:border-box;background:#fff;border:2px solid #3c55c8;border-radius:50%;"></div>
<svg class="a" style="left:268px;top:945.5px;width:14px;height:12.5px;" viewBox="0 0 576 512" preserveAspectRatio="none"><path fill="#4a5068" d="M215.03 71.05L126.06 160H24c-13.26 0-24 10.74-24 24v144c0 13.25 10.74 24 24 24h102.06l88.97 88.95c15.01 15.01 40.97 4.46 40.97-16.97V88.02c0-21.46-25.96-31.98-40.97-16.97zm233.32-51.08c-11.17-7.33-26.18-4.24-33.51 6.95-7.34 11.17-4.22 26.18 6.95 33.51 66.27 43.49 105.82 116.6 105.82 195.58 0 78.98-39.55 152.09-105.82 195.58-11.17 7.32-14.29 22.34-6.95 33.5 7.04 10.71 21.93 14.56 33.51 6.95C528.27 439.58 576 351.33 576 256S528.27 72.43 448.35 19.970zM480 256c0-63.53-32.06-121.94-85.77-156.24-11.19-7.14-26.03-3.82-33.12 7.46s-3.78 26.21 7.41 33.36C408.27 165.97 432 209.11 432 256s-23.73 90.03-63.48 115.42c-11.19 7.14-14.5 22.07-7.41 33.36 6.51 10.36 21.12 15.14 33.12 7.46C447.94 377.94 480 319.54 480 256zm-141.77-76.87c-11.58-6.33-26.19-2.16-32.61 9.45-6.39 11.61-2.16 26.2 9.45 32.61C327.98 228.28 336 241.630 336 256c0 14.38-8.02 27.72-20.92 34.81-11.61 6.41-15.84 21-9.45 32.61 6.43 11.66 21.05 15.8 32.61 9.45 28.23-15.55 45.77-45 45.77-76.88s-17.54-61.32-45.78-76.87z"/></svg>
<div class="t" style="top:975.15px;font-size:14px;line-height:14px;font-weight:400;color:#333333;letter-spacing:0.45px;left:73px;">Активность</div>
<div class="a" style="left:243px;top:970px;width:50px;height:26px;background:#3c55c8;border-radius:13px;"></div>
<div class="a" style="left:268px;top:972px;width:22.5px;height:22px;background:#ffffff;border-radius:50%;"></div>
<div class="a" style="left:306px;top:787.4px;width:249px;height:224.5px;box-sizing:border-box;border:1px solid #cfcfcf;border-radius:4px;"></div>
<div class="a" style="left:315.5px;top:786.4px;width:183.5px;height:3px;background:#fefefd;"></div>
<div class="t" style="top:783.02px;font-size:12.5px;line-height:12.5px;font-weight:400;color:#8a8a8a;letter-spacing:0.72px;left:320px;">Информация о компоненте</div>
<div class="t" style="top:806.32px;font-size:12.5px;line-height:12.5px;font-weight:400;color:#535970;letter-spacing:0.6px;left:320px;">Имя:</div>
<div class="t" style="top:806.32px;font-size:12.5px;line-height:12.5px;font-weight:700;color:#3b4dc4;letter-spacing:0.45px;right:745.55px;text-decoration:underline;text-underline-offset:1.5px;">#English Time-004...</div>
<div class="t" style="top:831.37px;font-size:12.5px;line-height:12.5px;font-weight:400;color:#535970;letter-spacing:0.6px;left:320px;">Длительность:</div>
<div class="t" style="top:831.37px;font-size:12.5px;line-height:12.5px;font-weight:700;color:#1a1a1a;letter-spacing:0.45px;right:745.55px;">31 сек</div>
<div class="t" style="top:856.42px;font-size:12.5px;line-height:12.5px;font-weight:400;color:#535970;letter-spacing:0.6px;left:320px;">Тип:</div>
<div class="t" style="top:856.42px;font-size:12.5px;line-height:12.5px;font-weight:700;color:#1a1a1a;letter-spacing:0.45px;right:745.55px;">Видео</div>
<div class="t" style="top:881.47px;font-size:12.5px;line-height:12.5px;font-weight:400;color:#535970;letter-spacing:0.6px;left:320px;">Разрешение:</div>
<div class="t" style="top:881.47px;font-size:12.5px;line-height:12.5px;font-weight:700;color:#1a1a1a;letter-spacing:0.45px;right:745.55px;">1920 x 1080</div>
<div class="t" style="top:906.52px;font-size:12.5px;line-height:12.5px;font-weight:400;color:#535970;letter-spacing:0.6px;left:320px;">Размер:</div>
<div class="t" style="top:906.52px;font-size:12.5px;line-height:12.5px;font-weight:700;color:#1a1a1a;letter-spacing:0.45px;right:745.55px;">11.86 MB</div>
<div class="t" style="top:931.57px;font-size:12.5px;line-height:12.5px;font-weight:400;color:#535970;letter-spacing:0.6px;left:320px;">Автор:</div>
<div class="t" style="top:931.57px;font-size:12.5px;line-height:12.5px;font-weight:700;color:#1a1a1a;letter-spacing:0.45px;right:745.55px;">User</div>
<div class="t" style="top:956.62px;font-size:12.5px;line-height:12.5px;font-weight:400;color:#535970;letter-spacing:0.6px;left:320px;">Тэги:</div>
<div class="t" style="top:956.62px;font-size:12.5px;line-height:12.5px;font-weight:700;color:#1a1a1a;letter-spacing:0.45px;right:745.55px;">English</div>
<div class="t" style="top:981.67px;font-size:12.5px;line-height:12.5px;font-weight:400;color:#535970;letter-spacing:0.6px;left:320px;">Статистика:</div>
<div class="t" style="top:981.67px;font-size:12.5px;line-height:12.5px;font-weight:700;color:#f1a817;letter-spacing:0.45px;right:745.55px;">Выкл</div>
<div class="a" style="left:568px;top:787.4px;width:343px;height:224.5px;box-sizing:border-box;border:1px solid #cfcfcf;border-radius:4px;"></div>
<div class="a" style="left:578.0px;top:786.4px;width:164.5px;height:3px;background:#fefefd;"></div>
<div class="t" style="top:783.02px;font-size:12.5px;line-height:12.5px;font-weight:400;color:#8a8a8a;letter-spacing:0.87px;left:582.5px;">Настройка ограничений</div>
<div class="a" style="left:852px;top:779px;width:45px;height:18px;background:#3c55c8;border-radius:9px;"></div>
<svg class="a" style="left:868px;top:781.5px;width:13px;height:13px;" viewBox="0 0 512 512" preserveAspectRatio="none"><path fill="#ffffff" d="M487.4 315.7l-42.6-24.6c4.3-23.2 4.3-47 0-70.2l42.6-24.6c4.9-2.8 7.1-8.6 5.5-14-11.1-35.6-30-67.8-54.7-94.6-3.8-4.1-10-5.1-14.8-2.3L380.8 110c-17.9-15.4-38.5-27.3-60.8-35.1V25.8c0-5.6-3.9-10.5-9.4-11.7-36.7-8.2-74.3-7.8-109.2 0-5.5 1.2-9.4 6.1-9.4 11.7V75c-22.2 7.9-42.8 19.8-60.8 35.1L88.7 85.5c-4.9-2.8-11-1.9-14.8 2.3-24.7 26.7-43.6 58.9-54.7 94.6-1.7 5.4.6 11.2 5.5 14L67.3 221c-4.3 23.2-4.3 47 0 70.2l-42.6 24.6c-4.9 2.8-7.1 8.6-5.5 14 11.1 35.6 30 67.8 54.7 94.6 3.8 4.1 10 5.1 14.8 2.3l42.6-24.6c17.9 15.4 38.5 27.3 60.8 35.1v49.2c0 5.6 3.9 10.5 9.4 11.700 36.7 8.2 74.3 7.8 109.2 0 5.5-1.2 9.4-6.1 9.4-11.7v-49.2c22.2-7.9 42.8-19.8 60.8-35.1l42.6 24.6c4.9 2.8 11 1.9 14.8-2.3 24.7-26.7 43.6-58.9 54.7-94.6 1.5-5.5-.7-11.3-5.6-14.1zM256 336c-44.1 0-80-35.9-80-80s35.9-80 80-80 80 35.9 80 80-35.9 80-80 80z"/></svg>
<div class="a" style="left:582px;top:815.4px;width:308px;height:47.5px;box-sizing:border-box;border:1px solid #cfcfcf;border-radius:4px;"></div>
<div class="a" style="left:592.0px;top:814.4px;width:111.5px;height:3px;background:#fefefd;"></div>
<div class="t" style="top:811.42px;font-size:12.5px;line-height:12.5px;font-weight:400;color:#8a8a8a;letter-spacing:0.7px;left:596.5px;">По дням недели</div>
<div class="t" style="top:833.62px;font-size:12.5px;line-height:12.5px;font-weight:700;color:#3b4cc0;letter-spacing:0.45px;left:597px;">Все дни</div>
<div class="a" style="left:924px;top:787.4px;width:342px;height:224.5px;box-sizing:border-box;border:1px solid #cfcfcf;border-radius:4px;"></div>
<div class="a" style="left:933.8px;top:786.4px;width:133.5px;height:3px;background:#fefefd;"></div>
<div class="t" style="top:783.02px;font-size:12.5px;line-height:12.5px;font-weight:400;color:#8a8a8a;letter-spacing:0.74px;left:938.3px;">Настройка событий</div>
<div class="a" style="left:1208px;top:779px;width:44px;height:18px;background:#3c55c8;border-radius:9px;"></div>
<svg class="a" style="left:1223.5px;top:781.5px;width:13px;height:13px;" viewBox="0 0 512 512" preserveAspectRatio="none"><path fill="#ffffff" d="M487.4 315.7l-42.6-24.6c4.3-23.2 4.3-47 0-70.2l42.6-24.6c4.9-2.8 7.1-8.6 5.5-14-11.1-35.6-30-67.8-54.7-94.6-3.8-4.1-10-5.1-14.8-2.3L380.8 110c-17.9-15.4-38.5-27.3-60.8-35.1V25.8c0-5.6-3.9-10.5-9.4-11.7-36.7-8.2-74.3-7.8-109.2 0-5.5 1.2-9.4 6.1-9.4 11.7V75c-22.2 7.9-42.8 19.8-60.8 35.1L88.7 85.5c-4.9-2.8-11-1.9-14.8 2.3-24.7 26.7-43.6 58.9-54.7 94.6-1.7 5.4.6 11.2 5.5 14L67.3 221c-4.3 23.2-4.3 47 0 70.2l-42.6 24.6c-4.9 2.8-7.1 8.6-5.5 14 11.1 35.6 30 67.8 54.7 94.6 3.8 4.1 10 5.1 14.8 2.3l42.6-24.6c17.9 15.4 38.5 27.3 60.8 35.1v49.2c0 5.6 3.9 10.5 9.4 11.700 36.7 8.2 74.3 7.8 109.2 0 5.5-1.2 9.4-6.1 9.4-11.7v-49.2c22.2-7.9 42.8-19.8 60.8-35.1l42.6 24.6c4.9 2.8 11 1.9 14.8-2.3 24.7-26.7 43.6-58.9 54.7-94.6 1.5-5.5-.7-11.3-5.6-14.1zM256 336c-44.1 0-80-35.9-80-80s35.9-80 80-80 80 35.9 80 80-35.9 80-80 80z"/></svg>
<div class="t" style="top:817.07px;font-size:13.5px;line-height:13.5px;font-weight:400;color:#333333;letter-spacing:0.55px;left:938.3px;">События не настроены...</div>
</body></html>
